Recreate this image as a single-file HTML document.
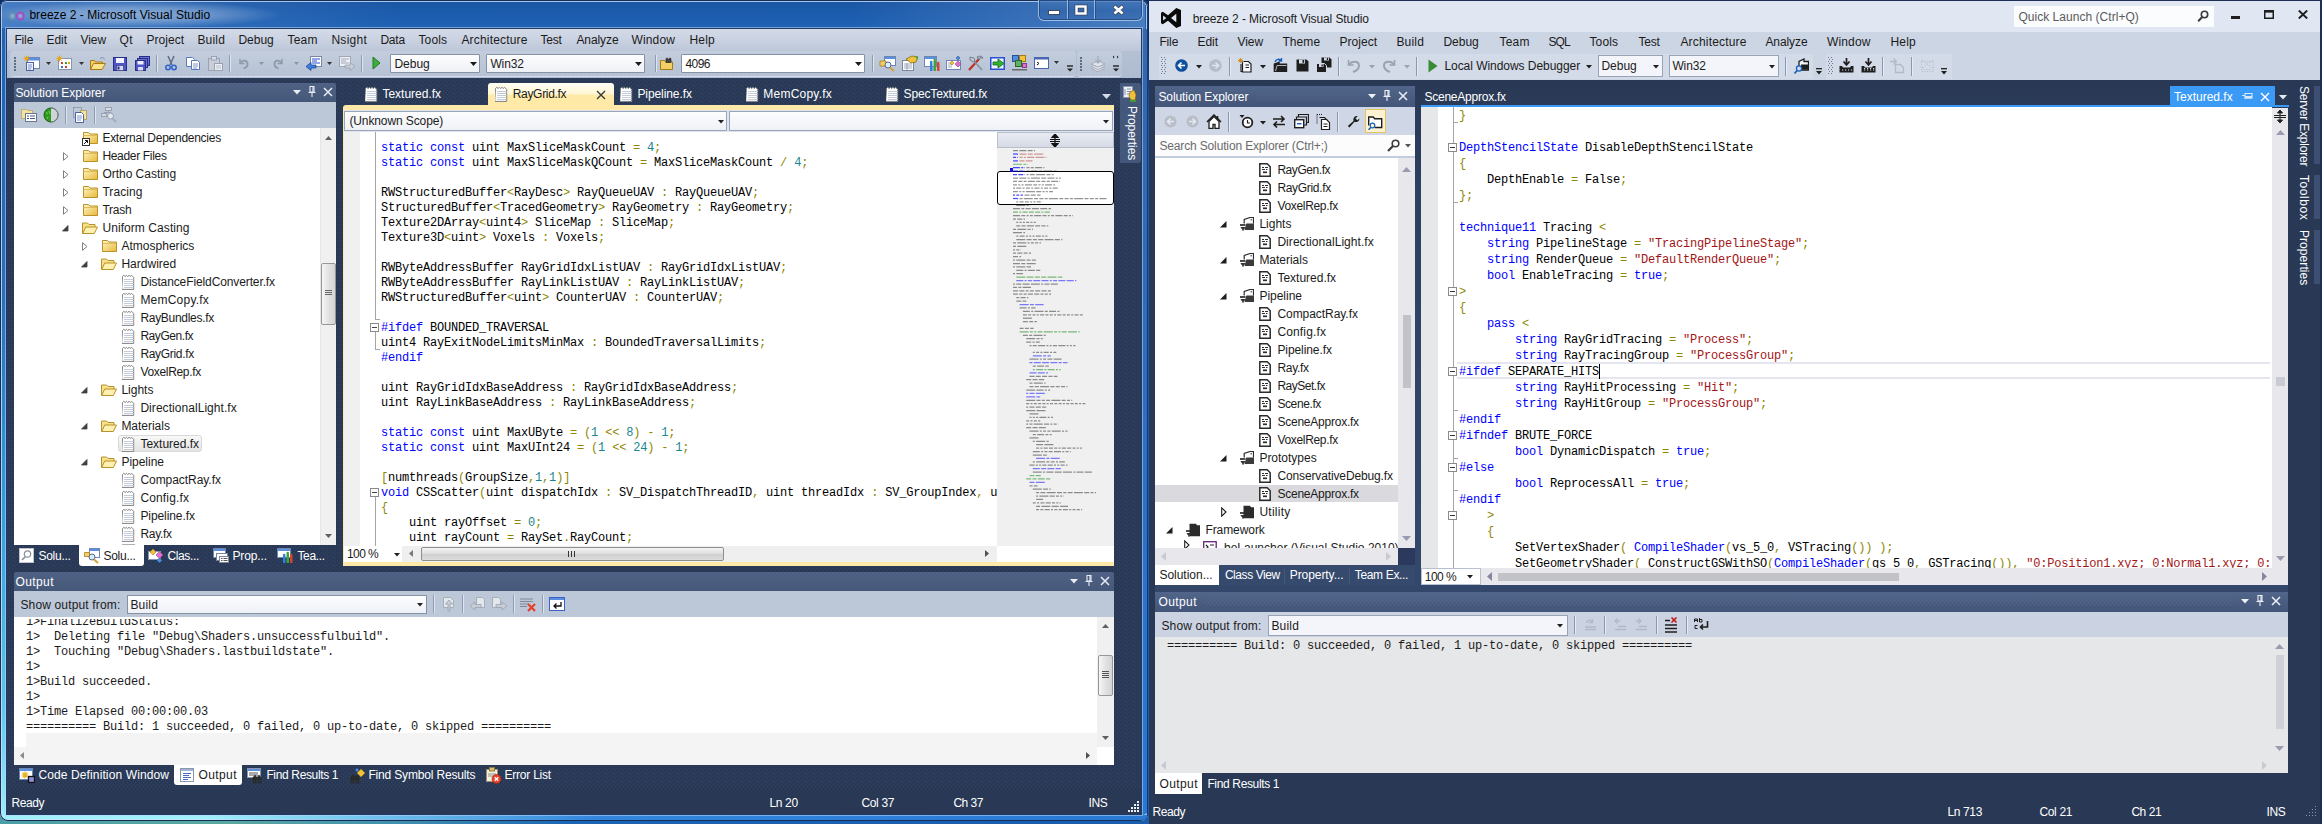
<!DOCTYPE html>
<html><head><meta charset="utf-8"><title>breeze 2 - Microsoft Visual Studio</title>
<style>
html,body{margin:0;padding:0;}
body{width:2322px;height:824px;overflow:hidden;position:relative;background:#293955;font-family:"Liberation Sans",sans-serif;}
div,span,svg{position:absolute;}
.t{white-space:pre;line-height:20px;height:20px;font-size:12px;}
.u{font-family:"Liberation Sans",sans-serif;}
.m{font-family:"Liberation Mono",monospace;font-size:12px;letter-spacing:-.201px;}
.c span{position:static;}
</style></head>
<body>
<svg width="0" height="0" style="left:0;top:0"><defs><linearGradient id="fg" x1="0" y1="0" x2="1" y2="1"><stop offset="0" stop-color="#fff6c8"/><stop offset="1" stop-color="#e8b93a"/></linearGradient></defs></svg>
<div style="left:0px;top:0px;width:1149px;height:824px;background:linear-gradient(180deg,#0b2a6a 0,#0b2a6a 40px,rgba(11,42,106,0) 120px),linear-gradient(90deg,#4a9ea6,#5aa8a0 20%,#3f8fb0 35%,#1c64b4 50%,#1a5cae 100%);"></div>
<div style="left:0px;top:0px;width:1148px;height:821px;background:linear-gradient(180deg,#1b55a3 0px,#1c5cae 14px,#2062b4 29px,#2870c0 300px,#36a0dc 520px,#5cc4ea 700px,#96ecf8 812px,#a6f4fb 821px);border-radius:7px 7px 8px 8px;box-shadow:inset 0 0 0 1px #14305a, inset 0 0 0 2px rgba(205,226,250,.8);"></div>
<div style="left:2px;top:2px;width:400px;height:26px;background:linear-gradient(90deg,rgba(90,140,205,.7),rgba(70,125,195,.5) 35%,rgba(40,100,180,0) 100%);"></div>
<div style="left:200px;top:815px;width:947px;height:5px;background:linear-gradient(90deg,rgba(45,128,218,0),rgba(45,128,218,.95) 42%,rgba(40,120,212,1));border-radius:0 0 6px 0;"></div>
<div style="left:1142px;top:29px;width:6px;height:786px;background:linear-gradient(180deg,#3567ab,#2e6cbc 40%,#2878d6);border-radius:0 0 5px 0;"></div>
<div style="left:1147px;top:8px;width:1px;height:808px;background:#1a3a6c;"></div>
<div style="left:-10px;top:1px;width:290px;height:27px;background:radial-gradient(ellipse at center,rgba(255,255,255,.42) 0%,rgba(255,255,255,.3) 35%,rgba(255,255,255,.08) 62%,rgba(255,255,255,0) 72%);"></div>
<svg style="left:8px;top:11px;" width="17" height="10" viewBox="0 0 17 10"><path d="M8.300 5C6.800 2.600 5.600 1.500 4.200 1.500 2.500 1.500 1.300 2.900 1.300 5s1.200 3.500 2.900 3.500c1.400 0 2.600-1.100 4.100-3.500z" fill="rgba(200,225,240,.35)" stroke="#5f8eae" stroke-width="1.900"/><path d="M8.300 5c1.500 2.400 2.700 3.500 4.200 3.500 1.800 0 3.100-1.400 3.100-3.500s-1.300-3.500-3.100-3.500c-1.500 0-2.700 1.100-4.200 3.500z" fill="rgba(230,200,245,.35)" stroke="#a24ec6" stroke-width="1.900"/></svg>
<span class="t u" style="left:29.4px;top:5px;color:#000;letter-spacing:0.047px;">breeze 2 - Microsoft Visual Studio</span>
<div style="left:850px;top:2px;width:295px;height:27px;background:linear-gradient(90deg,rgba(90,135,195,0),rgba(90,135,195,.5) 70%,rgba(100,145,200,.6));"></div>
<div style="left:1038px;top:0px;width:105px;height:21px;background:linear-gradient(180deg,rgba(70,120,185,.75),rgba(52,104,172,.75) 45%,rgba(48,100,170,.75) 50%,rgba(58,110,178,.75));border:1px solid rgba(175,200,232,.85);border-top:none;border-radius:0 0 6px 6px;box-sizing:border-box;box-shadow:inset 0 0 0 1px rgba(20,50,100,.55);"></div>
<div style="left:1067px;top:0px;width:1px;height:19px;background:rgba(175,200,232,.8);"></div>
<div style="left:1068px;top:0px;width:1px;height:19px;background:rgba(20,50,100,.5);"></div>
<div style="left:1094px;top:0px;width:1px;height:19px;background:rgba(175,200,232,.8);"></div>
<div style="left:1095px;top:0px;width:1px;height:19px;background:rgba(20,50,100,.5);"></div>
<svg style="left:1047px;top:9px;" width="14" height="7" viewBox="0 0 14 7"><rect x="1.500" y="1.500" width="11" height="4" fill="#fff" stroke="#3c4a64" stroke-width="1"/></svg>
<svg style="left:1074px;top:4px;" width="14" height="12" viewBox="0 0 14 12"><rect x="2.500" y="2.500" width="9" height="7" fill="none" stroke="#3c4a64" stroke-width="4"/><rect x="2.500" y="2.500" width="9" height="7" fill="none" stroke="#fff" stroke-width="2.400"/></svg>
<svg style="left:1111px;top:4px;" width="15" height="12" viewBox="0 0 15 12"><path d="M3 2l9 8M12 2l-9 8" stroke="#3c4a64" stroke-width="4.200"/><path d="M3.400 2.400l8.200 7.200M11.600 2.400l-8.200 7.200" stroke="#fff" stroke-width="2.600"/></svg>
<div style="left:7px;top:29px;width:1134px;height:785px;background:#293955;box-shadow:0 0 0 1px #1f3a68,0 0 0 2px rgba(190,215,245,.55);"></div>
<svg style="left:7px;top:78px;" width="1134" height="712" viewBox="0 0 1134 712"><defs><pattern id="pl" width="4" height="4" patternUnits="userSpaceOnUse"><rect x="0" y="0" width="1" height="1" fill="#34476b"/><rect x="2" y="2" width="1" height="1" fill="#34476b"/></pattern></defs><rect width="1134" height="712" fill="url(#pl)"/></svg>
<div style="left:7px;top:29px;width:1134px;height:22px;background:linear-gradient(180deg,#d3dae7 0,#cbd3e2 45%,#bcc7d9 100%);"></div>
<span class="t u" style="left:14.4px;top:30px;color:#1b1b1b;letter-spacing:-0.136px;">File</span>
<span class="t u" style="left:46.4px;top:30px;color:#1b1b1b;letter-spacing:0.028px;">Edit</span>
<span class="t u" style="left:80.4px;top:30px;color:#1b1b1b;letter-spacing:0.001px;">View</span>
<span class="t u" style="left:119.4px;top:30px;color:#1b1b1b;letter-spacing:0.564px;">Qt</span>
<span class="t u" style="left:146.4px;top:30px;color:#1b1b1b;letter-spacing:0.063px;">Project</span>
<span class="t u" style="left:197.4px;top:30px;color:#1b1b1b;letter-spacing:0.183px;">Build</span>
<span class="t u" style="left:238.4px;top:30px;color:#1b1b1b;letter-spacing:0.005px;">Debug</span>
<span class="t u" style="left:287.4px;top:30px;color:#1b1b1b;letter-spacing:0.239px;">Team</span>
<span class="t u" style="left:331.4px;top:30px;color:#1b1b1b;letter-spacing:0.297px;">Nsight</span>
<span class="t u" style="left:380.4px;top:30px;color:#1b1b1b;letter-spacing:-0.190px;">Data</span>
<span class="t u" style="left:418.4px;top:30px;color:#1b1b1b;letter-spacing:0.157px;">Tools</span>
<span class="t u" style="left:461.4px;top:30px;color:#1b1b1b;letter-spacing:0.181px;">Architecture</span>
<span class="t u" style="left:540.4px;top:30px;color:#1b1b1b;letter-spacing:-0.179px;">Test</span>
<span class="t u" style="left:576.4px;top:30px;color:#1b1b1b;letter-spacing:-0.072px;">Analyze</span>
<span class="t u" style="left:631.4px;top:30px;color:#1b1b1b;letter-spacing:0.185px;">Window</span>
<span class="t u" style="left:689.4px;top:30px;color:#1b1b1b;letter-spacing:0.228px;">Help</span>
<div style="left:7px;top:51px;width:1134px;height:27px;background:linear-gradient(180deg,#b4c0d4,#aebbd0);"></div>
<div style="left:10px;top:51px;width:1066px;height:25px;background:linear-gradient(180deg,#c3cddd,#bcc7d8 50%,#b6c2d5);border-radius:4px;box-shadow:0 1px 0 #d5dcea;"></div>
<div style="left:1077px;top:51px;width:45px;height:25px;background:linear-gradient(180deg,#c3cddd,#bcc7d8 50%,#b6c2d5);border-radius:4px;box-shadow:0 1px 0 #d5dcea;"></div>
<div style="left:14px;top:57px;width:2px;height:2px;background:#5c6a82;"></div>
<div style="left:14px;top:60px;width:2px;height:2px;background:#5c6a82;"></div>
<div style="left:14px;top:63px;width:2px;height:2px;background:#5c6a82;"></div>
<div style="left:14px;top:66px;width:2px;height:2px;background:#5c6a82;"></div>
<div style="left:14px;top:69px;width:2px;height:2px;background:#5c6a82;"></div>
<svg style="left:23px;top:55px;" width="18" height="17" viewBox="0 0 18 17"><rect x="4.5" y="2.5" width="12" height="11" fill="#fff" stroke="#6f86b5"/><rect x="5" y="3" width="11" height="2.5" fill="#5b8fe0"/><rect x="3.5" y="7.5" width="7" height="8" fill="#eef3fb" stroke="#4a64a0"/><path d="M5 10h4M5 12h4M5 14h3" stroke="#5a78c0" stroke-width=".8"/><path d="M3.5 .5v6M.5 3.5h6M1.4 1.4l4.2 4.2M5.6 1.4L1.4 5.6" stroke="#e6a515" stroke-width="1"/></svg>
<svg style="left:46px;top:62px;" width="5" height="3" viewBox="0 0 5 3"><path d="M0 0h5l-2.5 3z" fill="#333"/></svg>
<svg style="left:56px;top:55px;" width="18" height="17" viewBox="0 0 18 17"><rect x="2.5" y="3.5" width="13" height="11" fill="#fdfdfd" stroke="#8a96ad"/><rect x="5" y="7" width="2" height="2" fill="#d83b2b"/><rect x="9" y="7" width="2" height="2" fill="#3d9b35"/><rect x="12" y="7" width="2" height="2" fill="#e6a515"/><rect x="5" y="11" width="2" height="2" fill="#3a6fd8"/><rect x="9" y="11" width="2" height="2" fill="#d83b2b"/><path d="M3.5 .5v6M.5 3.5h6M1.4 1.4l4.2 4.2M5.6 1.4L1.4 5.6" stroke="#e6a515" stroke-width="1"/></svg>
<svg style="left:79px;top:62px;" width="5" height="3" viewBox="0 0 5 3"><path d="M0 0h5l-2.5 3z" fill="#333"/></svg>
<svg style="left:89px;top:55px;" width="18" height="17" viewBox="0 0 18 17"><path d="M1.5 14.5v-9h4l1 1.5h7v2" fill="#f3d067" stroke="#a87c14"/><path d="M1.5 14.5l3-6h12l-3.5 6z" fill="#fbe38e" stroke="#a87c14"/><path d="M11 3.5c2-1.5 4-1 4.5 1" fill="none" stroke="#7d8fb0"/></svg>
<svg style="left:112px;top:55px;" width="16" height="17" viewBox="0 0 16 17"><rect x="1.5" y="2.5" width="13" height="13" fill="#4f56c8" stroke="#2a2f86"/><rect x="4" y="3" width="8" height="5" fill="#f2f4ff"/><rect x="4.5" y="10.5" width="7" height="5" fill="#d8daf0" stroke="#2a2f86" stroke-width=".6"/><rect x="5.5" y="11.5" width="2" height="3" fill="#2a2f86"/></svg>
<svg style="left:134px;top:55px;" width="17" height="17" viewBox="0 0 17 17"><rect x="5.500" y="1.500" width="10" height="9" fill="#6a70d2" stroke="#2a2f86"/><rect x="3.5" y="3.500" width="10" height="9" fill="#6a70d2" stroke="#2a2f86"/><rect x="1.500" y="5.500" width="10" height="10" fill="#4f56c8" stroke="#2a2f86"/><rect x="3.500" y="6" width="6" height="3.500" fill="#eef"/><rect x="4" y="12" width="5" height="3.500" fill="#d8daf0"/></svg>
<svg style="left:164px;top:55px;" width="14" height="17" viewBox="0 0 14 17"><path d="M4 1l4 9M10 1l-4 9" stroke="#5a6a86" stroke-width="1.4"/><circle cx="4" cy="12.500" r="2.200" fill="none" stroke="#2f62c8" stroke-width="1.500"/><circle cx="10" cy="12.500" r="2.200" fill="none" stroke="#2f62c8" stroke-width="1.500"/></svg>
<svg style="left:185px;top:56px;" width="16" height="15" viewBox="0 0 16 15"><path d="M1.500 1.500h6l2 2v7h-8z" fill="#fff" stroke="#5a78c0"/><path d="M6.500 4.500h6l2 2v7h-8z" fill="#fff" stroke="#5a78c0"/><path d="M8 8h5M8 10h5M8 12h4" stroke="#5a78c0" stroke-width=".8"/></svg>
<svg style="left:207px;top:55px;" width="17" height="17" viewBox="0 0 17 17"><rect x="1.500" y="3.500" width="11" height="12" fill="#c9ced8" stroke="#9aa3b4"/><rect x="4.500" y="1.500" width="5" height="3.500" fill="#d7dbe3" stroke="#9aa3b4"/><rect x="7.500" y="8.500" width="8" height="7" fill="#eceef2" stroke="#9aa3b4"/><path d="M9 11h5M9 13h5" stroke="#aab2c0" stroke-width=".8"/></svg>
<svg style="left:238px;top:57px;" width="12" height="13" viewBox="0 0 12 13"><path d="M2 2v4.500h4.500" fill="none" stroke="#9099aa" stroke-width="1.500"/><path d="M2.500 6c1.500-3 7-3.500 7 1 0 2.500-2 4-4 4.500" fill="none" stroke="#9099aa" stroke-width="1.800"/></svg>
<svg style="left:259px;top:62px;" width="5" height="3" viewBox="0 0 5 3"><path d="M0 0h5l-2.500 3z" fill="#8b93a4"/></svg>
<svg style="left:272px;top:57px;" width="12" height="13" viewBox="0 0 12 13"><path d="M10 2v4.500h-4.500" fill="none" stroke="#9099aa" stroke-width="1.500"/><path d="M9.500 6c-1.500-3-7-3.500-7 1 0 2.500 2 4 4 4.500" fill="none" stroke="#9099aa" stroke-width="1.800"/></svg>
<svg style="left:294px;top:62px;" width="5" height="3" viewBox="0 0 5 3"><path d="M0 0h5l-2.500 3z" fill="#8b93a4"/></svg>
<svg style="left:305px;top:55px;" width="18" height="17" viewBox="0 0 18 17"><rect x="5.500" y="1.500" width="11" height="10" fill="#fff" stroke="#7b869c"/><path d="M7 4h8M7 6h5M7 8h8" stroke="#2a4fd0" stroke-width="1"/><path d="M1 11.500l5-4v2.500h5v3h-5v2.500z" fill="#3f7de0" stroke="#1d4aa0" stroke-width=".8"/></svg>
<svg style="left:327px;top:62px;" width="5" height="3" viewBox="0 0 5 3"><path d="M0 0h5l-2.5 3z" fill="#333"/></svg>
<svg style="left:338px;top:55px;" width="18" height="17" viewBox="0 0 18 17"><rect x="1.500" y="1.500" width="11" height="10" fill="#eef0f4" stroke="#a0a8b8"/><path d="M3 4h8M3 6h5M3 8h8" stroke="#a0a8b8" stroke-width="1"/><path d="M17 11.500l-5-4v2.500h-5v3h5v2.500z" fill="#c8ccd4" stroke="#9aa2b2" stroke-width=".8"/></svg>
<svg style="left:372px;top:56px;" width="9" height="14" viewBox="0 0 9 14"><path d="M1 1l7 6-7 6z" fill="#3bb13b" stroke="#1f7a1f" stroke-width="1"/></svg>
<svg style="left:659px;top:55px;" width="18" height="17" viewBox="0 0 18 17"><path d="M1.500 14.500v-9h4l1 1.500h7v7.500z" fill="#f3d067" stroke="#a87c14"/><path d="M7 4.500c0-2 2-2 2 0M10 4.500c0-2 2-2 2 0M7 4.500h5v3h-5z" fill="#444" stroke="#333" stroke-width=".8"/></svg>
<svg style="left:879px;top:55px;" width="18" height="17" viewBox="0 0 18 17"><rect x="5.500" y="1.500" width="11" height="9" fill="#fff" stroke="#6f86b5"/><rect x="6" y="2" width="10" height="2" fill="#5b8fe0"/><path d="M1 6h6v5h-6z" fill="#f3d067" stroke="#a87c14" stroke-width=".8"/><circle cx="9" cy="10" r="3" fill="#d8ecff" stroke="#5a6a86"/><path d="M11 12.500l4 3.500" stroke="#d7a13a" stroke-width="2"/></svg>
<svg style="left:901px;top:55px;" width="18" height="17" viewBox="0 0 18 17"><rect x="1.500" y="5.500" width="11" height="10" fill="#fff" stroke="#7b869c"/><path d="M3 9h8M3 11h8M3 13h8M6 8v7" stroke="#8a96ad" stroke-width=".8"/><path d="M5 4l6-3 6 1-2 5-5 1z" fill="#f0c23c" stroke="#8a6914" stroke-width=".8"/><path d="M14 2l3-1v4" fill="#4da74d"/></svg>
<svg style="left:923px;top:55px;" width="18" height="17" viewBox="0 0 18 17"><rect x="1.500" y="1.500" width="12" height="10" fill="#fff" stroke="#6f86b5"/><rect x="2" y="2" width="11" height="2" fill="#5b8fe0"/><rect x="7" y="8" width="2.500" height="8" fill="#2f7de0"/><rect x="10.500" y="6" width="2.500" height="10" fill="#3da33d"/><rect x="14" y="9" width="2.500" height="7" fill="#d8452f"/><circle cx="8.200" cy="7" r="1.300" fill="#2f7de0"/><circle cx="11.700" cy="5" r="1.300" fill="#3da33d"/><circle cx="15.200" cy="8" r="1.300" fill="#d8452f"/></svg>
<svg style="left:945px;top:55px;" width="18" height="17" viewBox="0 0 18 17"><rect x="1.500" y="5.500" width="14" height="9" fill="#fff" stroke="#6f86b5"/><path d="M3 8h4M3 10h4M3 12h4" stroke="#8a96ad" stroke-width=".8"/><path d="M5 8l2-2 2 2-2 2z" fill="#f0c23c" stroke="#a87c14" stroke-width=".6"/><path d="M10 9l3-3 3 3-3 3z" fill="#e070d0" stroke="#8a3a86" stroke-width=".6"/><path d="M11 3l2-2 2 2-2 2z" fill="#4d8fe0" stroke="#2a4f9a" stroke-width=".6"/></svg>
<svg style="left:967px;top:55px;" width="18" height="17" viewBox="0 0 18 17"><path d="M2 15L12 4" stroke="#c03020" stroke-width="2.200"/><path d="M10 2c2-1.500 5-1 6 1l-3 0-1 2z" fill="#a8b0c0" stroke="#5a6476" stroke-width=".7"/><path d="M15 15L6 5" stroke="#8a93a6" stroke-width="1.800"/><path d="M3 2l4 1 1 3-2 1-3-2z" fill="#c0c6d2" stroke="#5a6476" stroke-width=".7"/></svg>
<svg style="left:989px;top:56px;" width="17" height="15" viewBox="0 0 17 15"><rect x="1" y="1" width="15" height="13" fill="#2a4fd0"/><rect x="2.500" y="2.500" width="12" height="10" fill="#eef3ff"/><path d="M4 6h5v-3l6 4.500-6 4.500v-3h-5z" fill="#2fb52f" stroke="#136813" stroke-width=".8"/></svg>
<svg style="left:1011px;top:54px;" width="17" height="18" viewBox="0 0 17 18"><rect x="1.500" y="1.500" width="6" height="6" fill="#4d8fe0" stroke="#2a4f9a"/><rect x="8.500" y="1.500" width="6" height="6" fill="#f0c23c" stroke="#a87c14"/><rect x="4.500" y="6.500" width="6" height="6" fill="#5fb05f" stroke="#2a6a2a"/><rect x="11.500" y="9.500" width="4" height="4" fill="#e070d0" stroke="#8a3a86"/><rect x="1" y="15" width="15" height="1.500" fill="#6a6a6a"/></svg>
<svg style="left:1034px;top:57px;" width="15" height="12" viewBox="0 0 15 12"><rect x=".5" y=".5" width="14" height="11" fill="#fff" stroke="#4a66b0"/><rect x="1" y="1" width="13" height="1.500" fill="#4a66b0"/><path d="M3 5l2 1.500-2 1.500" fill="none" stroke="#111" stroke-width="1"/></svg>
<svg style="left:1054px;top:61px;" width="5" height="3" viewBox="0 0 5 3"><path d="M0 0h5l-2.5 3z" fill="#333"/></svg>
<svg style="left:1067px;top:65px;" width="6" height="7" viewBox="0 0 6 7"><path d="M0 1h6" stroke="#222" stroke-width="1.400"/><path d="M0 3.500h6l-3 3z" fill="#222"/></svg>
<div style="left:1080px;top:57px;width:2px;height:2px;background:#5c6a82;"></div>
<div style="left:1080px;top:60px;width:2px;height:2px;background:#5c6a82;"></div>
<div style="left:1080px;top:63px;width:2px;height:2px;background:#5c6a82;"></div>
<div style="left:1080px;top:66px;width:2px;height:2px;background:#5c6a82;"></div>
<div style="left:1080px;top:69px;width:2px;height:2px;background:#5c6a82;"></div>
<svg style="left:1090px;top:55px;" width="16" height="17" viewBox="0 0 16 17"><path d="M1 9l7-3 7 3-7 3z M1 11.500l7 3 7-3M1 13.500l7 3 7-3" fill="#dfe3ea" stroke="#9aa2b2" stroke-width=".8"/><path d="M8 1v6M5.500 5l2.500 3 2.500-3" fill="none" stroke="#a4acba" stroke-width="1.200"/></svg>
<svg style="left:1113px;top:55px;" width="6" height="17" viewBox="0 0 6 17"><path d="M0 1.500l1.500 1.500-1.500 1.500zM4 1.500l1.500 1.500-1.500 1.500z" fill="#222" transform="translate(0,-1)"/><path d="M0 11h6" stroke="#222" stroke-width="1.400"/><path d="M0 13.500h6l-3 3z" fill="#222"/></svg>
<div style="left:390px;top:54px;width:90px;height:19px;background:linear-gradient(180deg,#fdfdfe,#eef1f6);border:1px solid #8591a6;box-sizing:border-box;border-radius:1px;"></div>
<span class="t u" style="left:394.4px;top:53.5px;color:#1b1b1b;letter-spacing:0.005px;">Debug</span>
<svg style="left:470px;top:62px;" width="7" height="4" viewBox="0 0 7 4"><path d="M0 0h7l-3.5 4z" fill="#1b1b1b"/></svg>
<div style="left:486px;top:54px;width:159px;height:19px;background:linear-gradient(180deg,#fdfdfe,#eef1f6);border:1px solid #8591a6;box-sizing:border-box;border-radius:1px;"></div>
<span class="t u" style="left:490.4px;top:53.5px;color:#1b1b1b;letter-spacing:-0.123px;">Win32</span>
<svg style="left:635px;top:62px;" width="7" height="4" viewBox="0 0 7 4"><path d="M0 0h7l-3.5 4z" fill="#1b1b1b"/></svg>
<div style="left:681px;top:54px;width:184px;height:19px;background:#fff;border:1px solid #8591a6;box-sizing:border-box;border-radius:1px;"></div>
<span class="t u" style="left:685.4px;top:53.5px;color:#1b1b1b;letter-spacing:-0.526px;">4096</span>
<svg style="left:855px;top:62px;" width="7" height="4" viewBox="0 0 7 4"><path d="M0 0h7l-3.5 4z" fill="#1b1b1b"/></svg>
<div style="left:156px;top:55px;width:1px;height:17px;background:#8e9bb0;"></div>
<div style="left:157px;top:55px;width:1px;height:17px;background:#dfe5ef;"></div>
<div style="left:229px;top:55px;width:1px;height:17px;background:#8e9bb0;"></div>
<div style="left:230px;top:55px;width:1px;height:17px;background:#dfe5ef;"></div>
<div style="left:361px;top:55px;width:1px;height:17px;background:#8e9bb0;"></div>
<div style="left:362px;top:55px;width:1px;height:17px;background:#dfe5ef;"></div>
<div style="left:655px;top:55px;width:1px;height:17px;background:#8e9bb0;"></div>
<div style="left:656px;top:55px;width:1px;height:17px;background:#dfe5ef;"></div>
<div style="left:872px;top:55px;width:1px;height:17px;background:#8e9bb0;"></div>
<div style="left:873px;top:55px;width:1px;height:17px;background:#dfe5ef;"></div>
<div style="left:14px;top:83px;width:322px;height:19px;background:linear-gradient(180deg,#4f6285,#465879);border-radius:2px 2px 0 0;"></div>
<span class="t u" style="left:15.4px;top:82.5px;color:#fff;letter-spacing:-0.082px;">Solution Explorer</span>
<svg style="left:293px;top:90px;" width="8" height="5" viewBox="0 0 8 5"><path d="M0 0h8l-4 4.500z" fill="#e8ecf4"/></svg>
<svg style="left:308px;top:86px;" width="8" height="12" viewBox="0 0 8 12"><path d="M2 .500h4v5.500h-4zM.500 6.500h7M4 6.500v4.500" fill="none" stroke="#e8ecf4" stroke-width="1.100"/><path d="M5 1v5" stroke="#e8ecf4" stroke-width="1.200"/></svg>
<svg style="left:323px;top:87px;" width="10" height="10" viewBox="0 0 10 10"><path d="M1 1l8 8M9 1l-8 8" stroke="#e8ecf4" stroke-width="1.500"/></svg>
<div style="left:14px;top:102px;width:322px;height:26px;background:#bcc7d8;"></div>
<svg style="left:21px;top:107px;" width="16" height="15" viewBox="0 0 16 15"><path d="M.500 2.500h5l1 1h5v8h-11z" fill="#f3e3a0" stroke="#b8a36a" stroke-width=".8"/><rect x="4.500" y="6.500" width="11" height="8" fill="#fff" stroke="#6a7690"/><path d="M6 9h2M9 9h5M6 11.500h2M9 11.500h5" stroke="#4a5a80" stroke-width="1"/></svg>
<svg style="left:43px;top:107px;" width="16" height="16" viewBox="0 0 16 16"><circle cx="8" cy="8" r="7" fill="#2f9a1e" stroke="#1c5c12"/><path d="M8 1a7 7 0 0 1 0 14z" fill="#cfd4d8"/><path d="M8 1a7 7 0 0 1 0 14" fill="none" stroke="#70757c"/><path d="M3 5l2 2M5 10l-1 2M6 4l1 3" stroke="#6fd44f" stroke-width="1"/></svg>
<div style="left:65px;top:106px;width:1px;height:18px;background:#8e9bb0;"></div>
<div style="left:66px;top:106px;width:1px;height:18px;background:#dfe5ef;"></div>
<svg style="left:72px;top:107px;" width="16" height="16" viewBox="0 0 16 16"><path d="M1.500 .500h8v3M1.500 .500v10h3" fill="none" stroke="#6a7690" stroke-dasharray="1 1"/><rect x="8.500" y="3.500" width="6" height="9" fill="#f3e3a0" stroke="#b8a36a"/><path d="M3.500 5.500h6l2 2v8h-8z" fill="#fff" stroke="#4a64a0"/><path d="M5 9h5M5 11h5M5 13h4" stroke="#5a78c0" stroke-width=".8"/></svg>
<div style="left:94px;top:106px;width:1px;height:18px;background:#8e9bb0;"></div>
<div style="left:95px;top:106px;width:1px;height:18px;background:#dfe5ef;"></div>
<svg style="left:101px;top:107px;" width="16" height="16" viewBox="0 0 16 16"><rect x="4.500" y=".500" width="6" height="3" fill="#d5d9e0" stroke="#9aa2b2"/><rect x=".500" y="6.500" width="5" height="3" fill="#d5d9e0" stroke="#9aa2b2"/><path d="M7.500 3.500v2h-4.500v1M7.500 5.500h3" fill="none" stroke="#9aa2b2"/><circle cx="9.500" cy="9" r="3" fill="#e4e8ee" stroke="#9aa2b2"/><path d="M11.500 11.500l3.500 3.500" stroke="#a6adba" stroke-width="2"/></svg>
<div style="left:14px;top:128px;width:322px;height:417px;background:#fff;"></div>
<div style="left:320px;top:128px;width:16px;height:417px;background:#f0f0f0;border-left:1px solid #e6e6e6;box-sizing:border-box;"></div>
<svg style="left:325px;top:136px;" width="7" height="4" viewBox="0 0 7 4"><path d="M0 4l3.500-4 3.500 4z" fill="#606060"/></svg>
<svg style="left:325px;top:534px;" width="7" height="4" viewBox="0 0 7 4"><path d="M0 0l3.500 4 3.500-4z" fill="#606060"/></svg>
<div style="left:321px;top:263px;width:15px;height:62px;background:linear-gradient(90deg,#f6f6f6,#e2e2e2 50%,#d4d4d4);border:1px solid #979797;border-radius:2px;box-sizing:border-box;"></div>
<div style="left:325px;top:290px;width:7px;height:1px;background:#666;"></div>
<div style="left:325px;top:292px;width:7px;height:1px;background:#666;"></div>
<div style="left:325px;top:294px;width:7px;height:1px;background:#666;"></div>
<svg style="left:83px;top:130.5px;" width="16" height="14" viewBox="0 0 16 14"><path d="M.500 12.500v-11h5l1.500 1.500h7.500v9.500z" fill="url(#fg)" stroke="#b8922a"/><path d="M.500 4.500h14" stroke="#d9b24a" stroke-width=".8"/></svg>
<svg style="left:82px;top:137.5px;" width="8" height="8" viewBox="0 0 8 8"><rect x=".500" y=".500" width="7" height="7" fill="#fff" stroke="#333"/><path d="M2 6l3.500-3.500M3 2.500h2.500v2.500" fill="none" stroke="#111" stroke-width="1"/></svg>
<span class="t u" style="left:102.4px;top:127.5px;color:#1b1b1b;letter-spacing:-0.266px;">External Dependencies</span>
<svg style="left:83px;top:148.5px;" width="16" height="14" viewBox="0 0 16 14"><path d="M.500 12.500v-11h5l1.500 1.500h7.500v9.500z" fill="url(#fg)" stroke="#b8922a"/><path d="M.500 4.500h14" stroke="#d9b24a" stroke-width=".8"/></svg>
<svg style="left:63px;top:151.5px;" width="6" height="9" viewBox="0 0 6 9"><path d="M.500 .700l4.500 3.800-4.500 3.800z" fill="#fff" stroke="#7f7f7f" stroke-width="1"/></svg>
<span class="t u" style="left:102.4px;top:145.5px;color:#1b1b1b;letter-spacing:-0.319px;">Header Files</span>
<svg style="left:83px;top:166.5px;" width="16" height="14" viewBox="0 0 16 14"><path d="M.500 12.500v-11h5l1.500 1.500h7.500v9.500z" fill="url(#fg)" stroke="#b8922a"/><path d="M.500 4.500h14" stroke="#d9b24a" stroke-width=".8"/></svg>
<svg style="left:63px;top:169.5px;" width="6" height="9" viewBox="0 0 6 9"><path d="M.500 .700l4.500 3.800-4.500 3.800z" fill="#fff" stroke="#7f7f7f" stroke-width="1"/></svg>
<span class="t u" style="left:102.4px;top:163.5px;color:#1b1b1b;letter-spacing:-0.019px;">Ortho Casting</span>
<svg style="left:83px;top:184.5px;" width="16" height="14" viewBox="0 0 16 14"><path d="M.500 12.500v-11h5l1.500 1.500h7.500v9.500z" fill="url(#fg)" stroke="#b8922a"/><path d="M.500 4.500h14" stroke="#d9b24a" stroke-width=".8"/></svg>
<svg style="left:63px;top:187.5px;" width="6" height="9" viewBox="0 0 6 9"><path d="M.500 .700l4.500 3.800-4.500 3.800z" fill="#fff" stroke="#7f7f7f" stroke-width="1"/></svg>
<span class="t u" style="left:102.4px;top:181.5px;color:#1b1b1b;letter-spacing:0.060px;">Tracing</span>
<svg style="left:83px;top:202.5px;" width="16" height="14" viewBox="0 0 16 14"><path d="M.500 12.500v-11h5l1.500 1.500h7.500v9.500z" fill="url(#fg)" stroke="#b8922a"/><path d="M.500 4.500h14" stroke="#d9b24a" stroke-width=".8"/></svg>
<svg style="left:63px;top:205.5px;" width="6" height="9" viewBox="0 0 6 9"><path d="M.500 .700l4.500 3.800-4.500 3.800z" fill="#fff" stroke="#7f7f7f" stroke-width="1"/></svg>
<span class="t u" style="left:102.4px;top:199.5px;color:#1b1b1b;letter-spacing:-0.207px;">Trash</span>
<svg style="left:82px;top:220.5px;" width="16" height="14" viewBox="0 0 16 14"><path d="M.500 12.500v-10.500h5l1.500 1.500h6v3" fill="#f7e08a" stroke="#b8922a"/><path d="M.700 12.500l3-6.500h11.800l-3.200 6.500z" fill="#fdf0b0" stroke="#b8922a"/></svg>
<svg style="left:62px;top:224.5px;" width="7" height="7" viewBox="0 0 7 7"><path d="M6 .500v5.500h-5.500z" fill="#404040" stroke="#404040" stroke-width=".8"/></svg>
<span class="t u" style="left:102.4px;top:217.5px;color:#1b1b1b;letter-spacing:0.078px;">Uniform Casting</span>
<svg style="left:102px;top:238.5px;" width="16" height="14" viewBox="0 0 16 14"><path d="M.500 12.500v-11h5l1.500 1.500h7.500v9.500z" fill="url(#fg)" stroke="#b8922a"/><path d="M.500 4.500h14" stroke="#d9b24a" stroke-width=".8"/></svg>
<svg style="left:82px;top:241.5px;" width="6" height="9" viewBox="0 0 6 9"><path d="M.500 .700l4.500 3.800-4.500 3.800z" fill="#fff" stroke="#7f7f7f" stroke-width="1"/></svg>
<span class="t u" style="left:121.4px;top:235.5px;color:#1b1b1b;letter-spacing:0.025px;">Atmospherics</span>
<svg style="left:101px;top:256.5px;" width="16" height="14" viewBox="0 0 16 14"><path d="M.500 12.500v-10.500h5l1.500 1.500h6v3" fill="#f7e08a" stroke="#b8922a"/><path d="M.700 12.500l3-6.500h11.800l-3.200 6.500z" fill="#fdf0b0" stroke="#b8922a"/></svg>
<svg style="left:81px;top:260.5px;" width="7" height="7" viewBox="0 0 7 7"><path d="M6 .500v5.500h-5.500z" fill="#404040" stroke="#404040" stroke-width=".8"/></svg>
<span class="t u" style="left:121.4px;top:253.5px;color:#1b1b1b;letter-spacing:0.012px;">Hardwired</span>
<svg style="left:122px;top:273.5px;" width="14" height="16" viewBox="0 0 14 16"><path d="M.500 2.500l1.300-1.200 1.300 1.200 1.300-1.200 1.300 1.200 1.300-1.200 1.300 1.200 1.300-1.200 2.100 2.100v12h-12z" fill="#fff" stroke="#7f7f7f" stroke-width="1"/><path d="M2 5.500h9.500M2 7.500h9.500M2 9.500h9.500M2 11.500h9.500M2 13.500h9.500" stroke="#c4cbdb" stroke-width="1"/></svg>
<span class="t u" style="left:140.4px;top:271.5px;color:#1b1b1b;letter-spacing:-0.112px;">DistanceFieldConverter.fx</span>
<svg style="left:122px;top:291.5px;" width="14" height="16" viewBox="0 0 14 16"><path d="M.500 2.500l1.300-1.200 1.300 1.200 1.300-1.200 1.300 1.200 1.300-1.200 1.300 1.200 1.300-1.200 2.100 2.100v12h-12z" fill="#fff" stroke="#7f7f7f" stroke-width="1"/><path d="M2 5.500h9.500M2 7.500h9.500M2 9.500h9.500M2 11.500h9.500M2 13.500h9.500" stroke="#c4cbdb" stroke-width="1"/></svg>
<span class="t u" style="left:140.4px;top:289.5px;color:#1b1b1b;letter-spacing:0.223px;">MemCopy.fx</span>
<svg style="left:122px;top:309.5px;" width="14" height="16" viewBox="0 0 14 16"><path d="M.500 2.500l1.300-1.200 1.300 1.200 1.300-1.200 1.300 1.200 1.300-1.200 1.300 1.200 1.300-1.200 2.100 2.100v12h-12z" fill="#fff" stroke="#7f7f7f" stroke-width="1"/><path d="M2 5.500h9.500M2 7.500h9.500M2 9.500h9.500M2 11.500h9.500M2 13.500h9.500" stroke="#c4cbdb" stroke-width="1"/></svg>
<span class="t u" style="left:140.4px;top:307.5px;color:#1b1b1b;letter-spacing:-0.290px;">RayBundles.fx</span>
<svg style="left:122px;top:327.5px;" width="14" height="16" viewBox="0 0 14 16"><path d="M.500 2.500l1.300-1.200 1.300 1.200 1.300-1.200 1.300 1.200 1.300-1.200 1.300 1.200 1.300-1.200 2.100 2.100v12h-12z" fill="#fff" stroke="#7f7f7f" stroke-width="1"/><path d="M2 5.500h9.500M2 7.500h9.500M2 9.500h9.500M2 11.500h9.500M2 13.500h9.500" stroke="#c4cbdb" stroke-width="1"/></svg>
<span class="t u" style="left:140.4px;top:325.5px;color:#1b1b1b;letter-spacing:-0.445px;">RayGen.fx</span>
<svg style="left:122px;top:345.5px;" width="14" height="16" viewBox="0 0 14 16"><path d="M.500 2.500l1.300-1.200 1.300 1.200 1.300-1.200 1.300 1.200 1.300-1.200 1.300 1.200 1.300-1.200 2.100 2.100v12h-12z" fill="#fff" stroke="#7f7f7f" stroke-width="1"/><path d="M2 5.500h9.500M2 7.500h9.500M2 9.500h9.500M2 11.500h9.500M2 13.500h9.500" stroke="#c4cbdb" stroke-width="1"/></svg>
<span class="t u" style="left:140.4px;top:343.5px;color:#1b1b1b;letter-spacing:-0.309px;">RayGrid.fx</span>
<svg style="left:122px;top:363.5px;" width="14" height="16" viewBox="0 0 14 16"><path d="M.500 2.500l1.300-1.200 1.300 1.200 1.300-1.200 1.300 1.200 1.300-1.200 1.300 1.200 1.300-1.200 2.100 2.100v12h-12z" fill="#fff" stroke="#7f7f7f" stroke-width="1"/><path d="M2 5.500h9.500M2 7.500h9.500M2 9.500h9.500M2 11.500h9.500M2 13.500h9.500" stroke="#c4cbdb" stroke-width="1"/></svg>
<span class="t u" style="left:140.4px;top:361.5px;color:#1b1b1b;letter-spacing:-0.322px;">VoxelRep.fx</span>
<svg style="left:101px;top:382.5px;" width="16" height="14" viewBox="0 0 16 14"><path d="M.500 12.500v-10.500h5l1.500 1.500h6v3" fill="#f7e08a" stroke="#b8922a"/><path d="M.700 12.500l3-6.500h11.800l-3.200 6.500z" fill="#fdf0b0" stroke="#b8922a"/></svg>
<svg style="left:81px;top:386.5px;" width="7" height="7" viewBox="0 0 7 7"><path d="M6 .500v5.500h-5.500z" fill="#404040" stroke="#404040" stroke-width=".8"/></svg>
<span class="t u" style="left:121.4px;top:379.5px;color:#1b1b1b;letter-spacing:0.011px;">Lights</span>
<svg style="left:122px;top:399.5px;" width="14" height="16" viewBox="0 0 14 16"><path d="M.500 2.500l1.300-1.200 1.300 1.200 1.300-1.200 1.300 1.200 1.300-1.200 1.300 1.200 1.300-1.200 2.100 2.100v12h-12z" fill="#fff" stroke="#7f7f7f" stroke-width="1"/><path d="M2 5.500h9.500M2 7.500h9.500M2 9.500h9.500M2 11.500h9.500M2 13.500h9.500" stroke="#c4cbdb" stroke-width="1"/></svg>
<span class="t u" style="left:140.4px;top:397.5px;color:#1b1b1b;letter-spacing:0.053px;">DirectionalLight.fx</span>
<svg style="left:101px;top:418.5px;" width="16" height="14" viewBox="0 0 16 14"><path d="M.500 12.500v-10.500h5l1.500 1.500h6v3" fill="#f7e08a" stroke="#b8922a"/><path d="M.700 12.500l3-6.500h11.800l-3.200 6.500z" fill="#fdf0b0" stroke="#b8922a"/></svg>
<svg style="left:81px;top:422.5px;" width="7" height="7" viewBox="0 0 7 7"><path d="M6 .500v5.500h-5.500z" fill="#404040" stroke="#404040" stroke-width=".8"/></svg>
<span class="t u" style="left:121.4px;top:415.5px;color:#1b1b1b;letter-spacing:-0.021px;">Materials</span>
<div style="left:118px;top:435.0px;width:84px;height:17px;background:linear-gradient(180deg,#f8f8f8,#e5e5e5);border:1px solid #d9d9d9;border-radius:3px;box-sizing:border-box;"></div>
<svg style="left:122px;top:435.5px;" width="14" height="16" viewBox="0 0 14 16"><path d="M.500 2.500l1.300-1.200 1.300 1.200 1.300-1.200 1.300 1.200 1.300-1.200 1.300 1.200 1.300-1.200 2.100 2.100v12h-12z" fill="#fff" stroke="#7f7f7f" stroke-width="1"/><path d="M2 5.500h9.500M2 7.500h9.500M2 9.500h9.500M2 11.500h9.500M2 13.500h9.500" stroke="#c4cbdb" stroke-width="1"/></svg>
<span class="t u" style="left:140.4px;top:433.5px;color:#1b1b1b;letter-spacing:-0.000px;">Textured.fx</span>
<svg style="left:101px;top:454.5px;" width="16" height="14" viewBox="0 0 16 14"><path d="M.500 12.500v-10.500h5l1.500 1.500h6v3" fill="#f7e08a" stroke="#b8922a"/><path d="M.700 12.500l3-6.500h11.800l-3.200 6.500z" fill="#fdf0b0" stroke="#b8922a"/></svg>
<svg style="left:81px;top:458.5px;" width="7" height="7" viewBox="0 0 7 7"><path d="M6 .500v5.500h-5.500z" fill="#404040" stroke="#404040" stroke-width=".8"/></svg>
<span class="t u" style="left:121.4px;top:451.5px;color:#1b1b1b;letter-spacing:-0.013px;">Pipeline</span>
<svg style="left:122px;top:471.5px;" width="14" height="16" viewBox="0 0 14 16"><path d="M.500 2.500l1.300-1.200 1.300 1.200 1.300-1.200 1.300 1.200 1.300-1.200 1.300 1.200 1.300-1.200 2.100 2.100v12h-12z" fill="#fff" stroke="#7f7f7f" stroke-width="1"/><path d="M2 5.500h9.500M2 7.500h9.500M2 9.500h9.500M2 11.500h9.500M2 13.500h9.500" stroke="#c4cbdb" stroke-width="1"/></svg>
<span class="t u" style="left:140.4px;top:469.5px;color:#1b1b1b;letter-spacing:-0.049px;">CompactRay.fx</span>
<svg style="left:122px;top:489.5px;" width="14" height="16" viewBox="0 0 14 16"><path d="M.500 2.500l1.300-1.200 1.300 1.200 1.300-1.200 1.300 1.200 1.300-1.200 1.300 1.200 1.300-1.200 2.100 2.100v12h-12z" fill="#fff" stroke="#7f7f7f" stroke-width="1"/><path d="M2 5.500h9.500M2 7.500h9.500M2 9.500h9.500M2 11.500h9.500M2 13.500h9.500" stroke="#c4cbdb" stroke-width="1"/></svg>
<span class="t u" style="left:140.4px;top:487.5px;color:#1b1b1b;letter-spacing:0.149px;">Config.fx</span>
<svg style="left:122px;top:507.5px;" width="14" height="16" viewBox="0 0 14 16"><path d="M.500 2.500l1.300-1.200 1.300 1.200 1.300-1.200 1.300 1.200 1.300-1.200 1.300 1.200 1.300-1.200 2.100 2.100v12h-12z" fill="#fff" stroke="#7f7f7f" stroke-width="1"/><path d="M2 5.500h9.500M2 7.500h9.500M2 9.500h9.500M2 11.500h9.500M2 13.500h9.500" stroke="#c4cbdb" stroke-width="1"/></svg>
<span class="t u" style="left:140.4px;top:505.5px;color:#1b1b1b;letter-spacing:-0.080px;">Pipeline.fx</span>
<svg style="left:122px;top:525.5px;" width="14" height="16" viewBox="0 0 14 16"><path d="M.500 2.500l1.300-1.200 1.300 1.200 1.300-1.200 1.300 1.200 1.300-1.200 1.300 1.200 1.300-1.200 2.100 2.100v12h-12z" fill="#fff" stroke="#7f7f7f" stroke-width="1"/><path d="M2 5.500h9.500M2 7.500h9.500M2 9.500h9.500M2 11.500h9.500M2 13.500h9.500" stroke="#c4cbdb" stroke-width="1"/></svg>
<span class="t u" style="left:140.4px;top:523.5px;color:#1b1b1b;letter-spacing:-0.287px;">Ray.fx</span>
<div style="left:122px;top:544px;width:13px;height:1px;background:#b0b0b0;"></div>
<div style="left:79px;top:545px;width:65px;height:21px;background:#fff;border-radius:0 0 3px 3px;"></div>
<span class="t u" style="left:38.4px;top:546px;color:#fff;letter-spacing:-0.247px;">Solu...</span>
<svg style="left:19px;top:548px;" width="15" height="15" viewBox="0 0 15 15"><rect x=".500" y=".500" width="14" height="14" fill="#fff" stroke="#c0c4cc"/><circle cx="8.500" cy="6" r="3.200" fill="none" stroke="#8a8f98" stroke-width="1.200"/><path d="M6.500 8.500l-3.500 3.500" stroke="#8a8f98" stroke-width="1.600"/></svg>
<span class="t u" style="left:103.4px;top:546px;color:#1b1b1b;letter-spacing:-0.247px;">Solu...</span>
<svg style="left:84px;top:548px;" width="17" height="16" viewBox="0 0 17 16"><rect x="5.500" y=".500" width="10" height="9" fill="#fff" stroke="#6f86b5"/><rect x="6" y="1" width="9" height="2" fill="#5b8fe0"/><path d="M.500 4.500h5v4h-5z" fill="#f3d067" stroke="#a87c14" stroke-width=".8"/><circle cx="8" cy="9" r="3" fill="#d8ecff" stroke="#5a6a86"/><path d="M10 11.500l4 3.500" stroke="#d7a13a" stroke-width="2"/></svg>
<span class="t u" style="left:167.4px;top:546px;color:#fff;letter-spacing:-0.359px;">Clas...</span>
<svg style="left:148px;top:548px;" width="17" height="16" viewBox="0 0 17 16"><rect x=".500" y="3.500" width="12" height="8" fill="#fff" stroke="#8a96ad"/><path d="M2 4l3-3 3 3-3 3z" fill="#f0c23c" stroke="#a87c14" stroke-width=".6"/><path d="M8 7l3.500-3.500 3.500 3.500-3.500 3.500z" fill="#e070d0" stroke="#8a3a86" stroke-width=".6"/><path d="M9 12.500l2.500-2.500 2.500 2.500-2.500 2.500z" fill="#4d8fe0" stroke="#2a4f9a" stroke-width=".6"/></svg>
<span class="t u" style="left:232.4px;top:546px;color:#fff;letter-spacing:-0.123px;">Prop...</span>
<svg style="left:213px;top:548px;" width="17" height="16" viewBox="0 0 17 16"><rect x=".500" y=".500" width="12" height="9" fill="#fff" stroke="#6f86b5"/><rect x="1" y="1" width="11" height="2" fill="#5b8fe0"/><rect x="3.500" y="5.500" width="11" height="7" fill="#fff" stroke="#7b869c"/><rect x="6.500" y="8.500" width="9" height="6" fill="#fff" stroke="#7b869c"/><path d="M8 10.500h1.500M10.500 10.500h4M8 12.500h1.500M10.500 12.500h4" stroke="#555" stroke-width="1"/></svg>
<span class="t u" style="left:297.4px;top:546px;color:#fff;letter-spacing:-0.343px;">Tea...</span>
<svg style="left:277px;top:548px;" width="17" height="16" viewBox="0 0 17 16"><rect x=".500" y=".500" width="13" height="9" fill="#fff" stroke="#6f86b5"/><rect x="1" y="1" width="12" height="2" fill="#5b8fe0"/><rect x="6" y="8" width="2.500" height="7" fill="#2f7de0"/><rect x="9.500" y="6" width="2.500" height="9" fill="#3da33d"/><rect x="13" y="8" width="2.500" height="7" fill="#d8452f"/><circle cx="7.200" cy="7" r="1.300" fill="#2f7de0"/><circle cx="10.700" cy="5" r="1.300" fill="#3da33d"/><circle cx="14.200" cy="7" r="1.300" fill="#d8452f"/></svg>
<div style="left:488px;top:83px;width:126px;height:23px;background:linear-gradient(180deg,#fffdf3 0,#fff7d8 45%,#ffeaa6 55%,#ffe9a8 100%);border-radius:3px 3px 0 0;"></div>
<svg style="left:495px;top:86px;" width="14" height="16" viewBox="0 0 14 16"><path d="M.500 2.500l1.300-1.200 1.300 1.200 1.300-1.200 1.300 1.200 1.300-1.200 1.300 1.200 1.300-1.200 2.100 2.100v12h-12z" fill="#fff" stroke="#7f7f7f" stroke-width="1"/><path d="M2 5.500h9.500M2 7.500h9.500M2 9.500h9.500M2 11.500h9.500M2 13.500h9.500" stroke="#c4cbdb" stroke-width="1"/></svg>
<span class="t u" style="left:512.7px;top:84px;color:#1b1b1b;letter-spacing:-0.309px;">RayGrid.fx</span>
<svg style="left:596px;top:90px;" width="10" height="10" viewBox="0 0 10 10"><path d="M1 1l8 8M9 1l-8 8" stroke="#3a3a3a" stroke-width="1.400"/></svg>
<svg style="left:365px;top:86px;" width="14" height="16" viewBox="0 0 14 16"><path d="M.500 2.500l1.300-1.200 1.300 1.200 1.300-1.200 1.300 1.200 1.300-1.200 1.300 1.200 1.300-1.200 2.100 2.100v12h-12z" fill="#fff" stroke="#7f7f7f" stroke-width="1"/><path d="M2 5.500h9.500M2 7.500h9.500M2 9.500h9.500M2 11.500h9.500M2 13.500h9.500" stroke="#c4cbdb" stroke-width="1"/></svg>
<span class="t u" style="left:382.4px;top:84px;color:#fff;letter-spacing:-0.000px;">Textured.fx</span>
<svg style="left:620px;top:86px;" width="14" height="16" viewBox="0 0 14 16"><path d="M.500 2.500l1.300-1.200 1.300 1.200 1.300-1.200 1.300 1.200 1.300-1.200 1.300 1.200 1.300-1.200 2.100 2.100v12h-12z" fill="#fff" stroke="#7f7f7f" stroke-width="1"/><path d="M2 5.500h9.500M2 7.500h9.500M2 9.500h9.500M2 11.500h9.500M2 13.500h9.500" stroke="#c4cbdb" stroke-width="1"/></svg>
<span class="t u" style="left:637.4px;top:84px;color:#fff;letter-spacing:-0.080px;">Pipeline.fx</span>
<svg style="left:746px;top:86px;" width="14" height="16" viewBox="0 0 14 16"><path d="M.500 2.500l1.300-1.200 1.300 1.200 1.300-1.200 1.300 1.200 1.300-1.200 1.300 1.200 1.300-1.200 2.100 2.100v12h-12z" fill="#fff" stroke="#7f7f7f" stroke-width="1"/><path d="M2 5.500h9.500M2 7.500h9.500M2 9.500h9.500M2 11.500h9.500M2 13.500h9.500" stroke="#c4cbdb" stroke-width="1"/></svg>
<span class="t u" style="left:763.3px;top:84px;color:#fff;letter-spacing:0.223px;">MemCopy.fx</span>
<svg style="left:886px;top:86px;" width="14" height="16" viewBox="0 0 14 16"><path d="M.500 2.500l1.300-1.200 1.300 1.200 1.300-1.200 1.300 1.200 1.300-1.200 1.300 1.200 1.300-1.200 2.100 2.100v12h-12z" fill="#fff" stroke="#7f7f7f" stroke-width="1"/><path d="M2 5.500h9.500M2 7.500h9.500M2 9.500h9.500M2 11.500h9.500M2 13.500h9.500" stroke="#c4cbdb" stroke-width="1"/></svg>
<span class="t u" style="left:903.6px;top:84px;color:#fff;letter-spacing:-0.163px;">SpecTextured.fx</span>
<svg style="left:1102px;top:94px;" width="9" height="5" viewBox="0 0 9 5"><path d="M0 0h9l-4.500 5z" fill="#d5dbe6"/></svg>
<div style="left:343px;top:105px;width:771px;height:461px;background:#ffe9a8;border-radius:3px 0 0 0;"></div>
<div style="left:344px;top:110px;width:770px;height:22px;background:#dfe4ee;"></div>
<div style="left:344px;top:111px;width:383px;height:20px;background:linear-gradient(180deg,#fdfdfe,#eef1f6);border:1px solid #9aa5b8;box-sizing:border-box;"></div>
<div style="left:729px;top:111px;width:384px;height:20px;background:linear-gradient(180deg,#fdfdfe,#eef1f6);border:1px solid #9aa5b8;box-sizing:border-box;"></div>
<span class="t u" style="left:349.4px;top:111px;color:#1b1b1b;letter-spacing:-0.106px;">(Unknown Scope)</span>
<svg style="left:718px;top:120px;" width="6" height="4" viewBox="0 0 6 4"><path d="M0 0h6l-3 3.500z" fill="#222"/></svg>
<svg style="left:1103px;top:120px;" width="6" height="4" viewBox="0 0 6 4"><path d="M0 0h6l-3 3.500z" fill="#222"/></svg>
<div style="left:344px;top:132px;width:653px;height:414px;background:#fff;"></div>
<div style="left:344px;top:132px;width:16px;height:414px;background:#f0f0f0;"></div>
<span class="t m c" style="left:381px;top:138px;width:616px;overflow:hidden;"><span style="color:#0000ff">static</span> <span style="color:#0000ff">const</span> uint MaxSliceMaskCount <span style="color:#8f8700">=</span> <span style="color:#17868f">4</span><span style="color:#8f8700">;</span></span>
<span class="t m c" style="left:381px;top:153px;width:616px;overflow:hidden;"><span style="color:#0000ff">static</span> <span style="color:#0000ff">const</span> uint MaxSliceMaskQCount <span style="color:#8f8700">=</span> MaxSliceMaskCount <span style="color:#8f8700">/</span> <span style="color:#17868f">4</span><span style="color:#8f8700">;</span></span>
<span class="t m c" style="left:381px;top:183px;width:616px;overflow:hidden;">RWStructuredBuffer<span style="color:#8f8700">&lt;</span>RayDesc<span style="color:#8f8700">&gt;</span> RayQueueUAV <span style="color:#8f8700">:</span> RayQueueUAV<span style="color:#8f8700">;</span></span>
<span class="t m c" style="left:381px;top:198px;width:616px;overflow:hidden;">StructuredBuffer<span style="color:#8f8700">&lt;</span>TracedGeometry<span style="color:#8f8700">&gt;</span> RayGeometry <span style="color:#8f8700">:</span> RayGeometry<span style="color:#8f8700">;</span></span>
<span class="t m c" style="left:381px;top:213px;width:616px;overflow:hidden;">Texture2DArray<span style="color:#8f8700">&lt;</span>uint4<span style="color:#8f8700">&gt;</span> SliceMap <span style="color:#8f8700">:</span> SliceMap<span style="color:#8f8700">;</span></span>
<span class="t m c" style="left:381px;top:228px;width:616px;overflow:hidden;">Texture3D<span style="color:#8f8700">&lt;</span>uint<span style="color:#8f8700">&gt;</span> Voxels <span style="color:#8f8700">:</span> Voxels<span style="color:#8f8700">;</span></span>
<span class="t m c" style="left:381px;top:258px;width:616px;overflow:hidden;">RWByteAddressBuffer RayGridIdxListUAV <span style="color:#8f8700">:</span> RayGridIdxListUAV<span style="color:#8f8700">;</span></span>
<span class="t m c" style="left:381px;top:273px;width:616px;overflow:hidden;">RWByteAddressBuffer RayLinkListUAV <span style="color:#8f8700">:</span> RayLinkListUAV<span style="color:#8f8700">;</span></span>
<span class="t m c" style="left:381px;top:288px;width:616px;overflow:hidden;">RWStructuredBuffer<span style="color:#8f8700">&lt;</span>uint<span style="color:#8f8700">&gt;</span> CounterUAV <span style="color:#8f8700">:</span> CounterUAV<span style="color:#8f8700">;</span></span>
<span class="t m c" style="left:381px;top:318px;width:616px;overflow:hidden;"><span style="color:#0000ff">#ifdef</span> BOUNDED_TRAVERSAL</span>
<span class="t m c" style="left:381px;top:333px;width:616px;overflow:hidden;">uint4 RayExitNodeLimitsMinMax <span style="color:#8f8700">:</span> BoundedTraversalLimits<span style="color:#8f8700">;</span></span>
<span class="t m c" style="left:381px;top:348px;width:616px;overflow:hidden;"><span style="color:#0000ff">#endif</span></span>
<span class="t m c" style="left:381px;top:378px;width:616px;overflow:hidden;">uint RayGridIdxBaseAddress <span style="color:#8f8700">:</span> RayGridIdxBaseAddress<span style="color:#8f8700">;</span></span>
<span class="t m c" style="left:381px;top:393px;width:616px;overflow:hidden;">uint RayLinkBaseAddress <span style="color:#8f8700">:</span> RayLinkBaseAddress<span style="color:#8f8700">;</span></span>
<span class="t m c" style="left:381px;top:423px;width:616px;overflow:hidden;"><span style="color:#0000ff">static</span> <span style="color:#0000ff">const</span> uint MaxUByte <span style="color:#8f8700">=</span> <span style="color:#8f8700">(</span><span style="color:#17868f">1</span> <span style="color:#8f8700">&lt;</span><span style="color:#8f8700">&lt;</span> <span style="color:#17868f">8</span><span style="color:#8f8700">)</span> <span style="color:#8f8700">-</span> <span style="color:#17868f">1</span><span style="color:#8f8700">;</span></span>
<span class="t m c" style="left:381px;top:438px;width:616px;overflow:hidden;"><span style="color:#0000ff">static</span> <span style="color:#0000ff">const</span> uint MaxUInt24 <span style="color:#8f8700">=</span> <span style="color:#8f8700">(</span><span style="color:#17868f">1</span> <span style="color:#8f8700">&lt;</span><span style="color:#8f8700">&lt;</span> <span style="color:#17868f">24</span><span style="color:#8f8700">)</span> <span style="color:#8f8700">-</span> <span style="color:#17868f">1</span><span style="color:#8f8700">;</span></span>
<span class="t m c" style="left:381px;top:468px;width:616px;overflow:hidden;"><span style="color:#8f8700">[</span>numthreads<span style="color:#8f8700">(</span>GroupSize<span style="color:#8f8700">,</span><span style="color:#17868f">1</span><span style="color:#8f8700">,</span><span style="color:#17868f">1</span><span style="color:#8f8700">)</span><span style="color:#8f8700">]</span></span>
<span class="t m c" style="left:381px;top:483px;width:616px;overflow:hidden;"><span style="color:#0000ff">void</span> CSScatter<span style="color:#8f8700">(</span>uint dispatchIdx <span style="color:#8f8700">:</span> SV_DispatchThreadID<span style="color:#8f8700">,</span> uint threadIdx <span style="color:#8f8700">:</span> SV_GroupIndex<span style="color:#8f8700">,</span> uint groupIdx <span style="color:#8f8700">:</span> SV_GroupID<span style="color:#8f8700">)</span></span>
<span class="t m c" style="left:381px;top:498px;width:616px;overflow:hidden;"><span style="color:#8f8700">{</span></span>
<span class="t m c" style="left:381px;top:513px;width:616px;overflow:hidden;">    uint rayOffset <span style="color:#8f8700">=</span> <span style="color:#17868f">0</span><span style="color:#8f8700">;</span></span>
<span class="t m c" style="left:381px;top:528px;width:616px;overflow:hidden;">    uint rayCount <span style="color:#8f8700">=</span> RaySet<span style="color:#8f8700">.</span>RayCount<span style="color:#8f8700">;</span></span>
<div style="left:375px;top:132px;width:1px;height:188px;background:#a5a5a5;"></div>
<div style="left:375px;top:319px;width:5px;height:1px;background:#a5a5a5;"></div>
<svg style="left:370px;top:323px;" width="9" height="9" viewBox="0 0 9 9"><rect x=".5" y=".5" width="8" height="8" fill="#fff" stroke="#8a8a8a"/><path d="M2 4.500h5" stroke="#444" stroke-width="1"/></svg>
<div style="left:375px;top:332px;width:1px;height:18px;background:#a5a5a5;"></div>
<div style="left:375px;top:349px;width:5px;height:1px;background:#a5a5a5;"></div>
<svg style="left:370px;top:488px;" width="9" height="9" viewBox="0 0 9 9"><rect x=".5" y=".5" width="8" height="8" fill="#fff" stroke="#8a8a8a"/><path d="M2 4.500h5" stroke="#444" stroke-width="1"/></svg>
<div style="left:375px;top:497px;width:1px;height:49px;background:#a5a5a5;"></div>
<div style="left:344px;top:546px;width:653px;height:16px;background:#efefef;"></div>
<div style="left:344px;top:546px;width:58px;height:16px;background:#fff;"></div>
<span class="t u" style="left:346.9px;top:544px;color:#1b1b1b;letter-spacing:-0.546px;">100 %</span>
<svg style="left:394px;top:553px;" width="6" height="4" viewBox="0 0 6 4"><path d="M0 0h6l-3 3.500z" fill="#222"/></svg>
<svg style="left:409px;top:550px;" width="4" height="7" viewBox="0 0 4 7"><path d="M4 0l-4 3.500 4 3.500z" fill="#7a7a7a"/></svg>
<svg style="left:985px;top:550px;" width="4" height="7" viewBox="0 0 4 7"><path d="M0 0l4 3.500-4 3.500z" fill="#505050"/></svg>
<div style="left:421px;top:547px;width:303px;height:14px;background:linear-gradient(180deg,#f3f3f3,#dedede 50%,#cfcfcf 52%,#dcdcdc);border:1px solid #8e8e8e;border-radius:2px;box-sizing:border-box;"></div>
<div style="left:568px;top:551px;width:1px;height:6px;background:#333;"></div>
<div style="left:571px;top:551px;width:1px;height:6px;background:#333;"></div>
<div style="left:574px;top:551px;width:1px;height:6px;background:#333;"></div>
<div style="left:997px;top:132px;width:117px;height:414px;background:#f0f0f0;"></div>
<div style="left:997px;top:132px;width:117px;height:16px;background:linear-gradient(180deg,#e8ebf2,#d5dae5);border:1px solid #b9bfcc;box-sizing:border-box;"></div>
<svg style="left:1050px;top:134px;" width="10" height="13" viewBox="0 0 10 13"><path d="M5 0l3 3.500h-6zM5 13l3-3.500h-6zM5 2v9" fill="#111" stroke="#111" stroke-width="1.200"/><path d="M0 5.500h10M0 7.500h10" stroke="#111" stroke-width="1"/></svg>
<div style="left:997px;top:171px;width:117px;height:34px;background:#fff;border:1px solid #000;border-radius:3px;box-sizing:border-box;"></div>
<div style="left:1010px;top:168px;width:3px;height:4px;background:#1010d0;"></div>
<svg style="left:0;top:0;" width="1148" height="560" viewBox="0 0 1148 560" fill="none" stroke-width="1.250"><path d="M1013.0 150.6h22" stroke="#000" stroke-opacity="0.42" stroke-dasharray="5 1.3 7 1.3 5 1.3 5 1.3"/><path d="M1013.0 154.0h5" stroke="#0000ff" stroke-opacity="0.7" stroke-dasharray="7 1.3 7 1.3 3 1.3 3 1.3"/><path d="M1019.5 154.0h25" stroke="#a31515" stroke-opacity="0.42" stroke-dasharray="7 1.3 5 1.3 9 1.3 7 1.3"/><path d="M1013.0 157.4h5" stroke="#0000ff" stroke-opacity="0.7" stroke-dasharray="3 1.3 2 1.3 5 1.3 4 1.3"/><path d="M1019.5 157.4h27" stroke="#a31515" stroke-opacity="0.42" stroke-dasharray="3 1.3 2 1.3 7 1.3 9 1.3"/><path d="M1013.0 160.9h5" stroke="#0000ff" stroke-opacity="0.7" stroke-dasharray="9 1.3 2 1.3 7 1.3 5 1.3"/><path d="M1019.5 160.9h13" stroke="#a31515" stroke-opacity="0.42" stroke-dasharray="5 1.3 9 1.3 9 1.3 7 1.3"/><path d="M1013.0 164.3h15" stroke="#008000" stroke-opacity="0.42" stroke-dasharray="9 1.3 3 1.3 7 1.3 2 1.3"/><path d="M1013.0 167.7h12" stroke="#0000ff" stroke-opacity="0.7" stroke-dasharray="7 1.3 2 1.3 2 1.3 2 1.3"/><path d="M1026.5 167.7h18" stroke="#000" stroke-opacity="0.42" stroke-dasharray="3 1.3 3 1.3 7 1.3 2 1.3"/><path d="M1013.0 171.1h12" stroke="#0000ff" stroke-opacity="0.7" stroke-dasharray="5 1.3 4 1.3 5 1.3 7 1.3"/><path d="M1026.5 171.1h30" stroke="#000" stroke-opacity="0.42" stroke-dasharray="3 1.3 7 1.3 3 1.3 9 1.3"/><path d="M1013.0 174.5h12" stroke="#0000ff" stroke-opacity="0.7" stroke-dasharray="4 1.3 5 1.3 2 1.3 9 1.3"/><path d="M1026.5 174.5h28" stroke="#000" stroke-opacity="0.42" stroke-dasharray="2 1.3 5 1.3 9 1.3 4 1.3"/><path d="M1013.0 178.0h48" stroke="#000" stroke-opacity="0.42" stroke-dasharray="5 1.3 7 1.3 2 1.3 9 1.3"/><path d="M1013.0 181.4h47" stroke="#000" stroke-opacity="0.42" stroke-dasharray="4 1.3 4 1.3 3 1.3 7 1.3"/><path d="M1013.0 184.8h42" stroke="#000" stroke-opacity="0.42" stroke-dasharray="4 1.3 2 1.3 2 1.3 7 1.3"/><path d="M1013.0 188.2h45" stroke="#000" stroke-opacity="0.42" stroke-dasharray="2 1.3 5 1.3 2 1.3 4 1.3"/><path d="M1013.0 191.6h40" stroke="#000" stroke-opacity="0.42" stroke-dasharray="5 1.3 2 1.3 2 1.3 9 1.3"/><path d="M1013.0 195.1h10" stroke="#0000ff" stroke-opacity="0.7" stroke-dasharray="2 1.3 3 1.3 3 1.3 2 1.3"/><path d="M1024.5 195.1h16" stroke="#000" stroke-opacity="0.42" stroke-dasharray="5 1.3 5 1.3 9 1.3 5 1.3"/><path d="M1013.0 198.5h5" stroke="#0000ff" stroke-opacity="0.7" stroke-dasharray="5 1.3 2 1.3 7 1.3 9 1.3"/><path d="M1019.5 198.5h87" stroke="#000" stroke-opacity="0.42" stroke-dasharray="3 1.3 9 1.3 4 1.3 4 1.3"/><path d="M1016.3 201.9h26" stroke="#000" stroke-opacity="0.42" stroke-dasharray="2 1.3 4 1.3 4 1.3 2 1.3"/><path d="M1016.3 205.3h14" stroke="#000" stroke-opacity="0.42" stroke-dasharray="9 1.3 2 1.3 2 1.3 2 1.3"/><path d="M1013.0 208.7h38" stroke="#000" stroke-opacity="0.42" stroke-dasharray="7 1.3 3 1.3 5 1.3 7 1.3"/><path d="M1013.0 212.2h38" stroke="#008000" stroke-opacity="0.5" stroke-dasharray="5 1.3 2 1.3 5 1.3 5 1.3"/><path d="M1013.0 215.6h60" stroke="#000" stroke-opacity="0.42" stroke-dasharray="7 1.3 4 1.3 2 1.3 3 1.3"/><path d="M1013.0 219.0h12" stroke="#000" stroke-opacity="0.42" stroke-dasharray="3 1.3 5 1.3 4 1.3 2 1.3"/><path d="M1016.3 222.4h20" stroke="#000" stroke-opacity="0.42" stroke-dasharray="2 1.3 2 1.3 2 1.3 3 1.3"/><path d="M1016.3 225.8h32" stroke="#000" stroke-opacity="0.42" stroke-dasharray="4 1.3 4 1.3 7 1.3 5 1.3"/><path d="M1013.0 229.3h20" stroke="#000" stroke-opacity="0.42" stroke-dasharray="3 1.3 9 1.3 3 1.3 4 1.3"/><path d="M1013.0 232.7h12" stroke="#000" stroke-opacity="0.42" stroke-dasharray="9 1.3 9 1.3 7 1.3 3 1.3"/><path d="M1016.3 236.1h32" stroke="#000" stroke-opacity="0.42" stroke-dasharray="2 1.3 5 1.3 2 1.3 2 1.3"/><path d="M1016.3 239.5h46" stroke="#000" stroke-opacity="0.42" stroke-dasharray="9 1.3 5 1.3 4 1.3 5 1.3"/><path d="M1013.0 242.9h28" stroke="#000" stroke-opacity="0.42" stroke-dasharray="3 1.3 9 1.3 2 1.3 3 1.3"/><path d="M1013.0 246.4h14" stroke="#000" stroke-opacity="0.42" stroke-dasharray="3 1.3 9 1.3 2 1.3 2 1.3"/><path d="M1013.0 249.8h8" stroke="#000" stroke-opacity="0.42" stroke-dasharray="2 1.3 3 1.3 4 1.3 4 1.3"/><path d="M1013.0 253.2h18" stroke="#000" stroke-opacity="0.42" stroke-dasharray="3 1.3 5 1.3 4 1.3 9 1.3"/><path d="M1013.0 256.6h8" stroke="#000" stroke-opacity="0.42" stroke-dasharray="5 1.3 4 1.3 9 1.3 4 1.3"/><path d="M1013.0 260.0h24" stroke="#000" stroke-opacity="0.42" stroke-dasharray="2 1.3 9 1.3 4 1.3 4 1.3"/><path d="M1013.0 263.5h24" stroke="#000" stroke-opacity="0.42" stroke-dasharray="7 1.3 4 1.3 9 1.3 2 1.3"/><path d="M1013.0 266.9h18" stroke="#000" stroke-opacity="0.42" stroke-dasharray="2 1.3 9 1.3 5 1.3 2 1.3"/><path d="M1016.3 270.3h24" stroke="#000" stroke-opacity="0.42" stroke-dasharray="7 1.3 2 1.3 7 1.3 9 1.3"/><path d="M1013.0 273.7h10" stroke="#000" stroke-opacity="0.42" stroke-dasharray="2 1.3 9 1.3 2 1.3 4 1.3"/><path d="M1016.3 277.1h46" stroke="#008000" stroke-opacity="0.5" stroke-dasharray="9 1.3 7 1.3 5 1.3 5 1.3"/><path d="M1016.3 280.6h60" stroke="#0000ff" stroke-opacity="0.5" stroke-dasharray="7 1.3 2 1.3 4 1.3 7 1.3"/><path d="M1013.0 284.0h46" stroke="#000" stroke-opacity="0.42" stroke-dasharray="2 1.3 5 1.3 7 1.3 9 1.3"/><path d="M1013.0 287.4h18" stroke="#000" stroke-opacity="0.42" stroke-dasharray="4 1.3 3 1.3 9 1.3 7 1.3"/><path d="M1013.0 290.8h38" stroke="#000" stroke-opacity="0.42" stroke-dasharray="5 1.3 5 1.3 3 1.3 4 1.3"/><path d="M1013.0 294.2h38" stroke="#000" stroke-opacity="0.42" stroke-dasharray="5 1.3 3 1.3 3 1.3 5 1.3"/><path d="M1016.3 297.7h12" stroke="#000" stroke-opacity="0.42" stroke-dasharray="3 1.3 5 1.3 4 1.3 2 1.3"/><path d="M1016.3 301.1h10" stroke="#000" stroke-opacity="0.42" stroke-dasharray="5 1.3 5 1.3 4 1.3 3 1.3"/><path d="M1019.6 304.5h24" stroke="#0000ff" stroke-opacity="0.5" stroke-dasharray="9 1.3 4 1.3 9 1.3 7 1.3"/><path d="M1019.6 307.9h16" stroke="#000" stroke-opacity="0.42" stroke-dasharray="7 1.3 2 1.3 9 1.3 9 1.3"/><path d="M1022.9 311.3h38" stroke="#000" stroke-opacity="0.42" stroke-dasharray="7 1.3 2 1.3 9 1.3 3 1.3"/><path d="M1022.9 314.8h60" stroke="#000" stroke-opacity="0.42" stroke-dasharray="4 1.3 3 1.3 3 1.3 2 1.3"/><path d="M1022.9 318.2h10" stroke="#000" stroke-opacity="0.42" stroke-dasharray="9 1.3 7 1.3 9 1.3 9 1.3"/><path d="M1022.9 321.6h14" stroke="#000" stroke-opacity="0.42" stroke-dasharray="5 1.3 4 1.3 3 1.3 9 1.3"/><path d="M1019.6 328.4h14" stroke="#000" stroke-opacity="0.42" stroke-dasharray="4 1.3 4 1.3 7 1.3 9 1.3"/><path d="M1019.6 331.9h60" stroke="#008000" stroke-opacity="0.5" stroke-dasharray="9 1.3 3 1.3 2 1.3 5 1.3"/><path d="M1022.9 335.3h24" stroke="#000" stroke-opacity="0.42" stroke-dasharray="5 1.3 3 1.3 9 1.3 2 1.3"/><path d="M1026.2 338.7h18" stroke="#000" stroke-opacity="0.42" stroke-dasharray="9 1.3 3 1.3 2 1.3 9 1.3"/><path d="M1026.2 342.1h14" stroke="#000" stroke-opacity="0.42" stroke-dasharray="5 1.3 2 1.3 4 1.3 7 1.3"/><path d="M1029.5 345.5h46" stroke="#000" stroke-opacity="0.42" stroke-dasharray="2 1.3 4 1.3 7 1.3 2 1.3"/><path d="M1032.8 352.4h24" stroke="#000" stroke-opacity="0.42" stroke-dasharray="2 1.3 3 1.3 2 1.3 5 1.3"/><path d="M1032.8 355.8h18" stroke="#0000ff" stroke-opacity="0.5" stroke-dasharray="9 1.3 3 1.3 5 1.3 3 1.3"/><path d="M1029.5 359.2h32" stroke="#000" stroke-opacity="0.42" stroke-dasharray="9 1.3 2 1.3 3 1.3 5 1.3"/><path d="M1029.5 362.6h38" stroke="#0000ff" stroke-opacity="0.5" stroke-dasharray="3 1.3 7 1.3 7 1.3 7 1.3"/><path d="M1032.8 366.1h16" stroke="#000" stroke-opacity="0.42" stroke-dasharray="3 1.3 7 1.3 7 1.3 4 1.3"/><path d="M1032.8 369.5h28" stroke="#008000" stroke-opacity="0.5" stroke-dasharray="2 1.3 7 1.3 2 1.3 7 1.3"/><path d="M1029.5 372.9h20" stroke="#0000ff" stroke-opacity="0.5" stroke-dasharray="7 1.3 7 1.3 2 1.3 5 1.3"/><path d="M1029.5 376.3h28" stroke="#000" stroke-opacity="0.42" stroke-dasharray="5 1.3 5 1.3 5 1.3 4 1.3"/><path d="M1026.2 379.7h18" stroke="#000" stroke-opacity="0.42" stroke-dasharray="5 1.3 5 1.3 7 1.3 4 1.3"/><path d="M1029.5 383.2h16" stroke="#000" stroke-opacity="0.42" stroke-dasharray="3 1.3 9 1.3 2 1.3 2 1.3"/><path d="M1029.5 386.6h38" stroke="#000" stroke-opacity="0.42" stroke-dasharray="4 1.3 4 1.3 9 1.3 4 1.3"/><path d="M1026.2 390.0h24" stroke="#000" stroke-opacity="0.42" stroke-dasharray="9 1.3 7 1.3 2 1.3 7 1.3"/><path d="M1026.2 393.4h20" stroke="#0000ff" stroke-opacity="0.5" stroke-dasharray="2 1.3 5 1.3 9 1.3 5 1.3"/><path d="M1026.2 396.8h14" stroke="#0000ff" stroke-opacity="0.5" stroke-dasharray="9 1.3 7 1.3 9 1.3 3 1.3"/><path d="M1026.2 400.3h46" stroke="#000" stroke-opacity="0.42" stroke-dasharray="9 1.3 4 1.3 3 1.3 4 1.3"/><path d="M1026.2 403.7h60" stroke="#000" stroke-opacity="0.42" stroke-dasharray="3 1.3 2 1.3 3 1.3 3 1.3"/><path d="M1026.2 407.1h20" stroke="#000" stroke-opacity="0.42" stroke-dasharray="2 1.3 5 1.3 5 1.3 7 1.3"/><path d="M1026.2 410.5h20" stroke="#000" stroke-opacity="0.42" stroke-dasharray="9 1.3 9 1.3 2 1.3 2 1.3"/><path d="M1029.5 413.9h10" stroke="#000" stroke-opacity="0.42" stroke-dasharray="9 1.3 7 1.3 9 1.3 4 1.3"/><path d="M1029.5 417.4h24" stroke="#000" stroke-opacity="0.42" stroke-dasharray="2 1.3 2 1.3 2 1.3 7 1.3"/><path d="M1026.2 420.8h14" stroke="#000" stroke-opacity="0.42" stroke-dasharray="3 1.3 2 1.3 3 1.3 3 1.3"/><path d="M1026.2 424.2h32" stroke="#000" stroke-opacity="0.42" stroke-dasharray="2 1.3 3 1.3 9 1.3 5 1.3"/><path d="M1026.2 427.6h20" stroke="#000" stroke-opacity="0.42" stroke-dasharray="5 1.3 5 1.3 7 1.3 4 1.3"/><path d="M1029.5 431.0h38" stroke="#000" stroke-opacity="0.42" stroke-dasharray="9 1.3 2 1.3 3 1.3 3 1.3"/><path d="M1032.8 434.5h20" stroke="#000" stroke-opacity="0.42" stroke-dasharray="3 1.3 7 1.3 3 1.3 2 1.3"/><path d="M1029.5 437.9h10" stroke="#000" stroke-opacity="0.42" stroke-dasharray="9 1.3 9 1.3 5 1.3 7 1.3"/><path d="M1032.8 441.3h16" stroke="#000" stroke-opacity="0.42" stroke-dasharray="2 1.3 9 1.3 9 1.3 3 1.3"/><path d="M1036.1 444.7h18" stroke="#000" stroke-opacity="0.42" stroke-dasharray="7 1.3 9 1.3 4 1.3 5 1.3"/><path d="M1036.1 448.1h46" stroke="#000" stroke-opacity="0.42" stroke-dasharray="3 1.3 2 1.3 4 1.3 4 1.3"/><path d="M1032.8 451.6h38" stroke="#000" stroke-opacity="0.42" stroke-dasharray="7 1.3 2 1.3 3 1.3 4 1.3"/><path d="M1032.8 455.0h14" stroke="#000" stroke-opacity="0.42" stroke-dasharray="9 1.3 5 1.3 7 1.3 3 1.3"/><path d="M1036.1 458.4h24" stroke="#0000ff" stroke-opacity="0.5" stroke-dasharray="9 1.3 3 1.3 9 1.3 2 1.3"/><path d="M1032.8 461.8h32" stroke="#000" stroke-opacity="0.42" stroke-dasharray="2 1.3 9 1.3 3 1.3 4 1.3"/><path d="M1029.5 465.2h38" stroke="#000" stroke-opacity="0.42" stroke-dasharray="5 1.3 2 1.3 2 1.3 4 1.3"/><path d="M1032.8 468.7h28" stroke="#0000ff" stroke-opacity="0.5" stroke-dasharray="7 1.3 5 1.3 7 1.3 7 1.3"/><path d="M1032.8 472.1h60" stroke="#000" stroke-opacity="0.42" stroke-dasharray="9 1.3 2 1.3 7 1.3 7 1.3"/><path d="M1029.5 475.5h12" stroke="#008000" stroke-opacity="0.5" stroke-dasharray="5 1.3 5 1.3 3 1.3 5 1.3"/><path d="M1026.2 478.9h24" stroke="#008000" stroke-opacity="0.5" stroke-dasharray="5 1.3 4 1.3 7 1.3 5 1.3"/><path d="M1029.5 482.3h16" stroke="#0000ff" stroke-opacity="0.5" stroke-dasharray="5 1.3 9 1.3 4 1.3 7 1.3"/><path d="M1029.5 485.8h8" stroke="#000" stroke-opacity="0.42" stroke-dasharray="3 1.3 7 1.3 2 1.3 9 1.3"/><path d="M1032.8 489.2h18" stroke="#000" stroke-opacity="0.42" stroke-dasharray="9 1.3 5 1.3 2 1.3 7 1.3"/><path d="M1036.1 492.6h60" stroke="#000" stroke-opacity="0.42" stroke-dasharray="3 1.3 5 1.3 9 1.3 5 1.3"/><path d="M1036.1 496.0h28" stroke="#000" stroke-opacity="0.42" stroke-dasharray="2 1.3 9 1.3 5 1.3 3 1.3"/><path d="M1036.1 499.4h8" stroke="#000" stroke-opacity="0.42" stroke-dasharray="7 1.3 5 1.3 5 1.3 2 1.3"/><path d="M1032.8 502.9h28" stroke="#000" stroke-opacity="0.42" stroke-dasharray="3 1.3 2 1.3 4 1.3 5 1.3"/><path d="M1036.1 506.3h32" stroke="#000" stroke-opacity="0.42" stroke-dasharray="4 1.3 9 1.3 7 1.3 9 1.3"/><path d="M1036.1 509.7h46" stroke="#000" stroke-opacity="0.42" stroke-dasharray="3 1.3 3 1.3 5 1.3 2 1.3"/></svg>
<div style="left:997px;top:546px;width:117px;height:16px;background:#fff;"></div>
<div style="left:1120px;top:83px;width:21px;height:80px;background:#44587c;border-radius:0 3px 3px 0;"></div>
<svg style="left:1123px;top:86px;" width="15" height="16" viewBox="0 0 15 16"><rect x=".500" y=".500" width="9" height="11" fill="#eef2f8" stroke="#8a96ad"/><path d="M2 3v6M4 3h4M4 5.500h4M4 8h4" stroke="#6a7690" stroke-width=".8"/><path d="M7 6l4-2 2 5-1 5h-4l-2-4z" fill="#f0c23c" stroke="#8a6914" stroke-width=".7"/><rect x="7" y="14" width="6" height="2" fill="#3d9b35"/></svg>
<span class="t u" style="left:1142px;top:106px;color:#fff;letter-spacing:-0.040px;transform-origin:0 0;transform:rotate(90deg);">Properties</span>
<div style="left:14px;top:572px;width:1100px;height:19px;background:linear-gradient(180deg,#4f6285,#465879);border-radius:2px 2px 0 0;"></div>
<span class="t u" style="left:15.4px;top:572px;color:#fff;letter-spacing:0.428px;">Output</span>
<svg style="left:1070px;top:579px;" width="8" height="5" viewBox="0 0 8 5"><path d="M0 0h8l-4 4.500z" fill="#e8ecf4"/></svg>
<svg style="left:1085px;top:575px;" width="8" height="12" viewBox="0 0 8 12"><path d="M2 .500h4v5.500h-4zM.500 6.500h7M4 6.500v4.500" fill="none" stroke="#e8ecf4" stroke-width="1.100"/><path d="M5 1v5" stroke="#e8ecf4" stroke-width="1.200"/></svg>
<svg style="left:1100px;top:576px;" width="10" height="10" viewBox="0 0 10 10"><path d="M1 1l8 8M9 1l-8 8" stroke="#e8ecf4" stroke-width="1.500"/></svg>
<div style="left:14px;top:591px;width:1100px;height:26px;background:#bcc7d8;"></div>
<span class="t u" style="left:20.4px;top:595px;color:#1b1b1b;letter-spacing:0.159px;">Show output from:</span>
<div style="left:127px;top:595px;width:300px;height:19px;background:linear-gradient(180deg,#fdfdfe,#eef1f6);border:1px solid #8591a6;box-sizing:border-box;"></div>
<span class="t u" style="left:130.4px;top:594.5px;color:#1b1b1b;letter-spacing:0.183px;">Build</span>
<svg style="left:417px;top:603px;" width="6" height="4" viewBox="0 0 6 4"><path d="M0 0h6l-3 3.500z" fill="#222"/></svg>
<div style="left:433px;top:595px;width:1px;height:18px;background:#8e9bb0;"></div>
<div style="left:434px;top:595px;width:1px;height:18px;background:#dfe5ef;"></div>
<div style="left:462px;top:595px;width:1px;height:18px;background:#8e9bb0;"></div>
<div style="left:463px;top:595px;width:1px;height:18px;background:#dfe5ef;"></div>
<div style="left:513px;top:595px;width:1px;height:18px;background:#8e9bb0;"></div>
<div style="left:514px;top:595px;width:1px;height:18px;background:#dfe5ef;"></div>
<div style="left:542px;top:595px;width:1px;height:18px;background:#8e9bb0;"></div>
<div style="left:543px;top:595px;width:1px;height:18px;background:#dfe5ef;"></div>
<svg style="left:441px;top:596px;" width="14" height="16" viewBox="0 0 14 16"><path d="M2.500 1.500h7l3 3v7h-10z" fill="#e4e7ec" stroke="#a7aebb"/><path d="M7 15v-7h-2.500l3.500-4 3.500 4h-2.500v7z" fill="#c9cdd5" stroke="#9aa2b2" stroke-width=".8"/></svg>
<svg style="left:469px;top:596px;" width="17" height="16" viewBox="0 0 17 16"><path d="M7.500 1.500h6l2 2v8h-8z" fill="#e4e7ec" stroke="#a7aebb"/><path d="M1 10l5-4v2.500h6v3h-6v2.500z" fill="#c9cdd5" stroke="#9aa2b2" stroke-width=".8"/></svg>
<svg style="left:491px;top:596px;" width="17" height="16" viewBox="0 0 17 16"><path d="M1.500 1.500h6l2 2v8h-8z" fill="#e4e7ec" stroke="#a7aebb"/><path d="M16 10l-5-4v2.500h-6v3h6v2.500z" fill="#c9cdd5" stroke="#9aa2b2" stroke-width=".8"/></svg>
<svg style="left:519px;top:596px;" width="18" height="16" viewBox="0 0 18 16"><path d="M1 3h13M1 5.500h13M1 8h9M1 10.500h7" stroke="#7f8898" stroke-width="1"/><path d="M9 8l7 7M16 8l-7 7" stroke="#e8402a" stroke-width="2.200"/></svg>
<svg style="left:549px;top:597px;" width="16" height="14" viewBox="0 0 16 14"><rect x=".500" y=".500" width="15" height="13" fill="#fff" stroke="#3a62c8"/><rect x="1" y="1" width="14" height="2" fill="#5b8fe0"/><path d="M12 5v4h-7M7.500 6.500l-2.500 2.500 2.500 2.500" fill="none" stroke="#111" stroke-width="1.300"/></svg>
<div style="left:14px;top:617px;width:1083px;height:130px;background:#fff;"></div>
<div style="left:26px;top:733px;width:1071px;height:14px;background:#f4f4f4;"></div>
<span class="t m" style="left:26px;top:612.0px;color:#1b1b1b;clip-path:inset(7px 0 0 0);">1&gt;FinalizeBuildStatus:</span>
<span class="t m" style="left:26px;top:627.0px;color:#1b1b1b;">1&gt;  Deleting file "Debug\Shaders.unsuccessfulbuild".</span>
<span class="t m" style="left:26px;top:642.0px;color:#1b1b1b;">1&gt;  Touching "Debug\Shaders.lastbuildstate".</span>
<span class="t m" style="left:26px;top:657.0px;color:#1b1b1b;">1&gt;</span>
<span class="t m" style="left:26px;top:672.0px;color:#1b1b1b;">1&gt;Build succeeded.</span>
<span class="t m" style="left:26px;top:687.0px;color:#1b1b1b;">1&gt;</span>
<span class="t m" style="left:26px;top:702.0px;color:#1b1b1b;">1&gt;Time Elapsed 00:00:00.03</span>
<span class="t m" style="left:26px;top:717.0px;color:#1b1b1b;">========== Build: 1 succeeded, 0 failed, 0 up-to-date, 0 skipped ==========</span>
<div style="left:1097px;top:617px;width:17px;height:130px;background:#f0f0f0;"></div>
<svg style="left:1102px;top:624px;" width="7" height="4" viewBox="0 0 7 4"><path d="M0 4l3.500-4 3.500 4z" fill="#606060"/></svg>
<svg style="left:1102px;top:736px;" width="7" height="4" viewBox="0 0 7 4"><path d="M0 0l3.500 4 3.500-4z" fill="#606060"/></svg>
<div style="left:1098px;top:655px;width:15px;height:41px;background:linear-gradient(90deg,#f6f6f6,#e2e2e2 50%,#d4d4d4);border:1px solid #979797;border-radius:2px;box-sizing:border-box;"></div>
<div style="left:1102px;top:671px;width:7px;height:1px;background:#555;"></div>
<div style="left:1102px;top:673px;width:7px;height:1px;background:#555;"></div>
<div style="left:1102px;top:675px;width:7px;height:1px;background:#555;"></div>
<div style="left:1102px;top:677px;width:7px;height:1px;background:#555;"></div>
<div style="left:14px;top:747px;width:1083px;height:18px;background:#f4f4f4;"></div>
<div style="left:1097px;top:747px;width:17px;height:18px;background:#fff;"></div>
<svg style="left:20px;top:752px;" width="4" height="7" viewBox="0 0 4 7"><path d="M4 0l-4 3.500 4 3.500z" fill="#8a8a8a"/></svg>
<svg style="left:1086px;top:752px;" width="4" height="7" viewBox="0 0 4 7"><path d="M0 0l4 3.500-4 3.500z" fill="#505050"/></svg>
<div style="left:174px;top:765px;width:68px;height:20px;background:#fff;border-radius:0 0 3px 3px;"></div>
<span class="t u" style="left:38.4px;top:765px;color:#fff;letter-spacing:0.120px;">Code Definition Window</span>
<svg style="left:19px;top:768px;" width="16" height="15" viewBox="0 0 16 15"><rect x=".500" y=".500" width="13" height="11" fill="#fff" stroke="#6f86b5"/><rect x="1" y="1" width="12" height="2" fill="#5b8fe0"/><path d="M6 3.500v7M2.500 7h7M3.500 4.500l5 5M8.500 4.500l-5 5" stroke="#e8b020" stroke-width="1.200" fill="none"/><rect x="9.500" y="8.500" width="6" height="6" fill="#8f8fdc" stroke="#111" stroke-width="1.300"/></svg>
<span class="t u" style="left:198.4px;top:765px;color:#1b1b1b;letter-spacing:0.428px;">Output</span>
<svg style="left:180px;top:768px;" width="15" height="15" viewBox="0 0 15 15"><rect x=".500" y=".500" width="13" height="13" fill="#fff" stroke="#8a96ad"/><rect x="1" y="1" width="12" height="2" fill="#a0b4d8"/><path d="M3 5.500h8M3 7.500h6M3 9.500h8M3 11.500h5" stroke="#4a6ac8" stroke-width="1"/></svg>
<span class="t u" style="left:266.4px;top:765px;color:#fff;letter-spacing:-0.350px;">Find Results 1</span>
<svg style="left:247px;top:768px;" width="17" height="16" viewBox="0 0 17 16"><rect x=".500" y=".500" width="13" height="9" fill="#fff" stroke="#8a96ad"/><rect x="1" y="1" width="12" height="2" fill="#5b8fe0"/><path d="M2 5h9M2 7h9" stroke="#555" stroke-width="1"/><path d="M7 9c0-2.500 2-2.500 2 0M11 9c0-2.500 2-2.500 2 0M6 9h8v2h-8zM6 11h3v4h-3zM11 11h3v4h-3z" fill="#333" stroke="#222" stroke-width=".6"/></svg>
<span class="t u" style="left:368.4px;top:765px;color:#fff;letter-spacing:-0.166px;">Find Symbol Results</span>
<svg style="left:349px;top:768px;" width="17" height="16" viewBox="0 0 17 16"><path d="M6 2l2-2 2 2-2 2z" fill="#4d8fe0" stroke="#2a4f9a" stroke-width=".6"/><path d="M8 5l4-4 4 4-4 4z" fill="#f0c23c" stroke="#a87c14" stroke-width=".6"/><path d="M3 9c0-2.500 2-2.500 2 0M7 9c0-2.500 2-2.500 2 0M2 9h8v2h-8zM2 11h3v4h-3zM7 11h3v4h-3z" fill="#333" stroke="#222" stroke-width=".6"/></svg>
<span class="t u" style="left:504.4px;top:765px;color:#fff;letter-spacing:-0.209px;">Error List</span>
<svg style="left:485px;top:767px;" width="17" height="17" viewBox="0 0 17 17"><rect x="1.500" y="2.500" width="11" height="12" fill="#f4f0e0" stroke="#9a8f70"/><rect x="4.500" y=".500" width="5" height="3.500" fill="#d8c070" stroke="#8a7a40"/><path d="M3 7h8M3 9h6" stroke="#777" stroke-width=".8"/><circle cx="11.500" cy="12" r="4.500" fill="#e8402a" stroke="#a02010" stroke-width=".6"/><path d="M9.700 10.200l3.600 3.600M13.300 10.200l-3.600 3.600" stroke="#fff" stroke-width="1.300"/></svg>
<span class="t u" style="left:11.4px;top:793px;color:#fff;letter-spacing:-0.417px;">Ready</span>
<span class="t u" style="left:769.4px;top:793px;color:#fff;letter-spacing:-0.326px;">Ln 20</span>
<span class="t u" style="left:861.4px;top:793px;color:#fff;letter-spacing:-0.315px;">Col 37</span>
<span class="t u" style="left:953.4px;top:793px;color:#fff;letter-spacing:-0.526px;">Ch 37</span>
<span class="t u" style="left:1088.4px;top:793px;color:#fff;letter-spacing:-0.272px;">INS</span>
<div style="left:1128px;top:810px;width:2px;height:2px;background:#eef1f7;"></div>
<div style="left:1131px;top:807px;width:2px;height:2px;background:#eef1f7;"></div>
<div style="left:1131px;top:810px;width:2px;height:2px;background:#eef1f7;"></div>
<div style="left:1134px;top:804px;width:2px;height:2px;background:#eef1f7;"></div>
<div style="left:1134px;top:807px;width:2px;height:2px;background:#eef1f7;"></div>
<div style="left:1134px;top:810px;width:2px;height:2px;background:#eef1f7;"></div>
<div style="left:1137px;top:801px;width:2px;height:2px;background:#eef1f7;"></div>
<div style="left:1137px;top:804px;width:2px;height:2px;background:#eef1f7;"></div>
<div style="left:1137px;top:807px;width:2px;height:2px;background:#eef1f7;"></div>
<div style="left:1137px;top:810px;width:2px;height:2px;background:#eef1f7;"></div>
<div style="left:1149px;top:0px;width:1173px;height:824px;background:#1d2f55;"></div>
<div style="left:1149px;top:1px;width:1171px;height:823px;background:#293955;"></div>
<div style="left:1149px;top:1px;width:1171px;height:31px;background:#e0e7f2;"></div>
<svg style="left:1161px;top:8px;" width="20" height="20" viewBox="0 0 20 20"><path d="M15.300 0L20 2V18L15.300 20L7 12.700L1.800 16.200L0 15.200V4.800L1.800 3.800L7 7.300ZM15.300 5.800L10 10L15.300 14.200ZM2.100 7.500L5.300 10L2.100 12.500Z" fill="#0a0a0a" fill-rule="evenodd"/></svg>
<span class="t u" style="left:1192.7px;top:8.5px;color:#1b1b1b;letter-spacing:-0.088px;">breeze 2 - Microsoft Visual Studio</span>
<div style="left:2014px;top:6px;width:200px;height:21px;background:#fbfcfd;"></div>
<span class="t u" style="left:2018.4px;top:6.5px;color:#5a5a5a;letter-spacing:0.037px;">Quick Launch (Ctrl+Q)</span>
<svg style="left:2197px;top:10px;" width="12" height="12" viewBox="0 0 12 12"><circle cx="7.500" cy="4.500" r="3.200" fill="none" stroke="#3a3a3a" stroke-width="1.600"/><path d="M5.200 7l-4 4.200" stroke="#3a3a3a" stroke-width="2"/></svg>
<div style="left:2231px;top:15.5px;width:9px;height:3.5px;background:#1e1e1e;"></div>
<svg style="left:2264px;top:10px;" width="10" height="9" viewBox="0 0 10 9"><rect x=".750" y="1.500" width="8.500" height="6.750" fill="none" stroke="#1e1e1e" stroke-width="1.500"/><rect x="0" y="0" width="10" height="2.500" fill="#1e1e1e"/></svg>
<svg style="left:2298px;top:10px;" width="10" height="9" viewBox="0 0 10 9"><path d="M.800 .500l8.400 8M9.200 .500l-8.400 8" stroke="#1e1e1e" stroke-width="1.900"/></svg>
<div style="left:1149px;top:32px;width:1171px;height:48px;background:#ccd5e4;"></div>
<span class="t u" style="left:1159.4px;top:31.5px;color:#1b1b1b;letter-spacing:-0.136px;">File</span>
<span class="t u" style="left:1197.4px;top:31.5px;color:#1b1b1b;letter-spacing:0.028px;">Edit</span>
<span class="t u" style="left:1237.4px;top:31.5px;color:#1b1b1b;letter-spacing:0.001px;">View</span>
<span class="t u" style="left:1282.4px;top:31.5px;color:#1b1b1b;letter-spacing:0.088px;">Theme</span>
<span class="t u" style="left:1339.4px;top:31.5px;color:#1b1b1b;letter-spacing:0.063px;">Project</span>
<span class="t u" style="left:1396.4px;top:31.5px;color:#1b1b1b;letter-spacing:0.183px;">Build</span>
<span class="t u" style="left:1443.4px;top:31.5px;color:#1b1b1b;letter-spacing:0.005px;">Debug</span>
<span class="t u" style="left:1499.4px;top:31.5px;color:#1b1b1b;letter-spacing:0.239px;">Team</span>
<span class="t u" style="left:1548.4px;top:31.5px;color:#1b1b1b;letter-spacing:-0.905px;">SQL</span>
<span class="t u" style="left:1589.4px;top:31.5px;color:#1b1b1b;letter-spacing:0.157px;">Tools</span>
<span class="t u" style="left:1638.4px;top:31.5px;color:#1b1b1b;letter-spacing:-0.179px;">Test</span>
<span class="t u" style="left:1680.4px;top:31.5px;color:#1b1b1b;letter-spacing:0.181px;">Architecture</span>
<span class="t u" style="left:1765.4px;top:31.5px;color:#1b1b1b;letter-spacing:-0.072px;">Analyze</span>
<span class="t u" style="left:1826.9px;top:31.5px;color:#1b1b1b;letter-spacing:0.185px;">Window</span>
<span class="t u" style="left:1890.4px;top:31.5px;color:#1b1b1b;letter-spacing:0.228px;">Help</span>
<div style="left:1159px;top:54px;width:654px;height:25px;background:#d3dae8;"></div>
<div style="left:1826px;top:54px;width:126px;height:25px;background:#d3dae8;"></div>
<svg style="left:1161px;top:57px;" width="6" height="19" viewBox="0 0 6 19"><rect x="0" y="0" width="1" height="1" fill="#6a7890"/><rect x="3" y="0" width="1" height="1" fill="#6a7890"/><rect x="1" y="2" width="1" height="1" fill="#6a7890"/><rect x="4" y="2" width="1" height="1" fill="#6a7890"/><rect x="0" y="4" width="1" height="1" fill="#6a7890"/><rect x="3" y="4" width="1" height="1" fill="#6a7890"/><rect x="1" y="6" width="1" height="1" fill="#6a7890"/><rect x="4" y="6" width="1" height="1" fill="#6a7890"/><rect x="0" y="8" width="1" height="1" fill="#6a7890"/><rect x="3" y="8" width="1" height="1" fill="#6a7890"/><rect x="1" y="10" width="1" height="1" fill="#6a7890"/><rect x="4" y="10" width="1" height="1" fill="#6a7890"/><rect x="0" y="12" width="1" height="1" fill="#6a7890"/><rect x="3" y="12" width="1" height="1" fill="#6a7890"/><rect x="1" y="14" width="1" height="1" fill="#6a7890"/><rect x="4" y="14" width="1" height="1" fill="#6a7890"/><rect x="0" y="16" width="1" height="1" fill="#6a7890"/><rect x="3" y="16" width="1" height="1" fill="#6a7890"/></svg>
<svg style="left:1175px;top:59px;" width="13" height="13" viewBox="0 0 13 13"><circle cx="6.500" cy="6.500" r="6.300" fill="#0e4f9e"/><path d="M10 6.500h-6M6.500 3.500l-3 3 3 3" fill="none" stroke="#fff" stroke-width="1.700"/></svg>
<svg style="left:1196px;top:65px;" width="6" height="4" viewBox="0 0 6 4"><path d="M0 0h6l-3 3.500z" fill="#1e1e1e"/></svg>
<svg style="left:1209px;top:59px;" width="13" height="13" viewBox="0 0 13 13"><circle cx="6.500" cy="6.500" r="6.300" fill="#b6bccb"/><path d="M3 6.500h6M6.500 3.500l3 3-3 3" fill="none" stroke="#dfe3ec" stroke-width="1.700"/></svg>
<div style="left:1229px;top:57px;width:1px;height:19px;background:#8d98ad;"></div>
<div style="left:1230px;top:57px;width:1px;height:19px;background:#e6ebf3;"></div>
<svg style="left:1238px;top:58px;" width="15" height="16" viewBox="0 0 15 16"><path d="M5.500 3.500h5l2.500 2.500v8h-8.500v-10.500" fill="#f4f6fa" stroke="#1e1e1e" stroke-width="1.200"/><path d="M3 6v7.500h2" fill="none" stroke="#1e1e1e" stroke-width="1.100"/><path d="M7.500 7h3.500M7.500 9.500h3.500" stroke="#1e1e1e" stroke-width="1"/><path d="M2.500 0v5M0 2.500h5M.700 .700l3.600 3.600M4.300 .700L.700 4.300" stroke="#d08a14" stroke-width=".9"/></svg>
<svg style="left:1260px;top:65px;" width="6" height="4" viewBox="0 0 6 4"><path d="M0 0h6l-3 3.500z" fill="#1e1e1e"/></svg>
<svg style="left:1273px;top:58px;" width="15" height="15" viewBox="0 0 15 15"><path d="M.700 14v-8.500l6-2v2h7.500v8.500z" fill="#1e1e1e"/><path d="M2.500 13l1.500-5.500h9.500" fill="none" stroke="#d3dae8" stroke-width=".8"/><path d="M2 4c1-3 4.500-3.500 6-1.500M8.500 0v3h-3" fill="none" stroke="#1560b8" stroke-width="1.400"/></svg>
<svg style="left:1296px;top:59px;" width="13" height="13" viewBox="0 0 13 13"><path d="M.500 .500h10l2 2v10h-12z" fill="#1e1e1e"/><rect x="3" y=".500" width="6" height="4" fill="#d3dae8"/><rect x="6.500" y="1" width="1.600" height="2.800" fill="#1e1e1e"/></svg>
<svg style="left:1316px;top:57px;" width="16" height="16" viewBox="0 0 16 16"><path d="M5.500 .500h8l2 2v8h-10z" fill="#1e1e1e"/><rect x="8" y=".500" width="5" height="3" fill="#d3dae8"/><rect x="10.800" y="1" width="1.300" height="2" fill="#1e1e1e"/><path d="M.500 6.500h8l2 2v7h-10z" fill="#1e1e1e" stroke="#d3dae8" stroke-width="1"/><rect x="3" y="7" width="4.500" height="3" fill="#d3dae8"/><rect x="5.500" y="7.500" width="1.300" height="2" fill="#1e1e1e"/></svg>
<div style="left:1338px;top:57px;width:1px;height:19px;background:#8d98ad;"></div>
<div style="left:1339px;top:57px;width:1px;height:19px;background:#e6ebf3;"></div>
<svg style="left:1347px;top:59px;" width="14" height="14" viewBox="0 0 14 14"><path d="M1.500 1v5h5" fill="none" stroke="#9ba2b2" stroke-width="1.600"/><path d="M2 6c2-4.500 10-4.500 10 .500 0 3.500-3 5.500-6 6.500" fill="none" stroke="#9ba2b2" stroke-width="2"/></svg>
<svg style="left:1369px;top:65px;" width="6" height="4" viewBox="0 0 6 4"><path d="M0 0h6l-3 3.500z" fill="#9ba2b2"/></svg>
<svg style="left:1382px;top:59px;" width="14" height="14" viewBox="0 0 14 14"><path d="M12.500 1v5h-5" fill="none" stroke="#9ba2b2" stroke-width="1.600"/><path d="M12 6c-2-4.500-10-4.500-10 .500 0 3.500 3 5.500 6 6.500" fill="none" stroke="#9ba2b2" stroke-width="2"/></svg>
<svg style="left:1404px;top:65px;" width="6" height="4" viewBox="0 0 6 4"><path d="M0 0h6l-3 3.500z" fill="#9ba2b2"/></svg>
<div style="left:1416px;top:57px;width:1px;height:19px;background:#8d98ad;"></div>
<div style="left:1417px;top:57px;width:1px;height:19px;background:#e6ebf3;"></div>
<svg style="left:1428px;top:59px;" width="10" height="14" viewBox="0 0 10 14"><path d="M.500 .500l9 6.500-9 6.500z" fill="#388a34"/></svg>
<span class="t u" style="left:1444.4px;top:56px;color:#1b1b1b;letter-spacing:-0.043px;">Local Windows Debugger</span>
<svg style="left:1586px;top:65px;" width="6" height="4" viewBox="0 0 6 4"><path d="M0 0h6l-3 3.500z" fill="#1e1e1e"/></svg>
<div style="left:1598px;top:55px;width:65px;height:22px;background:#f3f5fa;border:1px solid #99a3b8;box-sizing:border-box;"></div>
<span class="t u" style="left:1601.4px;top:56.0px;color:#1b1b1b;letter-spacing:0.005px;">Debug</span>
<svg style="left:1653px;top:65px;" width="6" height="4" viewBox="0 0 6 4"><path d="M0 0h6l-3 3.500z" fill="#1e1e1e"/></svg>
<div style="left:1669px;top:55px;width:110px;height:22px;background:#f3f5fa;border:1px solid #99a3b8;box-sizing:border-box;"></div>
<span class="t u" style="left:1672.4px;top:56.0px;color:#1b1b1b;letter-spacing:-0.123px;">Win32</span>
<svg style="left:1769px;top:65px;" width="6" height="4" viewBox="0 0 6 4"><path d="M0 0h6l-3 3.500z" fill="#1e1e1e"/></svg>
<div style="left:1785px;top:57px;width:1px;height:19px;background:#8d98ad;"></div>
<div style="left:1786px;top:57px;width:1px;height:19px;background:#e6ebf3;"></div>
<svg style="left:1794px;top:58px;" width="15" height="16" viewBox="0 0 15 16"><path d="M5 9v-5.500l5-2.500v2.500h4.500v8.500h-7.500" fill="#f4f6fa" stroke="#1e1e1e" stroke-width="1.300"/><path d="M7 6.500h7v5h-7z" fill="#1e1e1e"/><circle cx="5" cy="10.500" r="2.600" fill="#d3dae8" stroke="#1560b8" stroke-width="1.300"/><path d="M3.200 12.500l-2.700 3" stroke="#1560b8" stroke-width="1.600"/></svg>
<svg style="left:1816px;top:68px;" width="6" height="7" viewBox="0 0 6 7"><path d="M0 .700h6" stroke="#1e1e1e" stroke-width="1.300"/><path d="M0 3h6l-3 3.500z" fill="#1e1e1e"/></svg>
<svg style="left:1828px;top:57px;" width="6" height="19" viewBox="0 0 6 19"><rect x="0" y="0" width="1" height="1" fill="#6a7890"/><rect x="3" y="0" width="1" height="1" fill="#6a7890"/><rect x="1" y="2" width="1" height="1" fill="#6a7890"/><rect x="4" y="2" width="1" height="1" fill="#6a7890"/><rect x="0" y="4" width="1" height="1" fill="#6a7890"/><rect x="3" y="4" width="1" height="1" fill="#6a7890"/><rect x="1" y="6" width="1" height="1" fill="#6a7890"/><rect x="4" y="6" width="1" height="1" fill="#6a7890"/><rect x="0" y="8" width="1" height="1" fill="#6a7890"/><rect x="3" y="8" width="1" height="1" fill="#6a7890"/><rect x="1" y="10" width="1" height="1" fill="#6a7890"/><rect x="4" y="10" width="1" height="1" fill="#6a7890"/><rect x="0" y="12" width="1" height="1" fill="#6a7890"/><rect x="3" y="12" width="1" height="1" fill="#6a7890"/><rect x="1" y="14" width="1" height="1" fill="#6a7890"/><rect x="4" y="14" width="1" height="1" fill="#6a7890"/><rect x="0" y="16" width="1" height="1" fill="#6a7890"/><rect x="3" y="16" width="1" height="1" fill="#6a7890"/></svg>
<svg style="left:1839px;top:58px;" width="15" height="15" viewBox="0 0 15 15"><path d="M7.500 0v6M4.500 3.500l3 3.500 3-3.500" fill="none" stroke="#1e1e1e" stroke-width="1.700"/><path d="M.500 8h2.500l1 1.500h7l1-1.500h2.500v6.500h-14z" fill="#1e1e1e"/><path d="M3 12h1.200M6 12h1.200M9 12h1.200M12 12h1.200" stroke="#d3dae8" stroke-width="1.200"/></svg>
<svg style="left:1861px;top:58px;" width="15" height="15" viewBox="0 0 15 15"><path d="M7.500 0v6M4.500 3.500l3 3.500 3-3.500" fill="none" stroke="#1e1e1e" stroke-width="1.700"/><path d="M.500 8h2.500l1 1.500h7l1-1.500h2.500v6.500h-14z" fill="#1e1e1e"/><path d="M3 12h1.200M6 12h1.200M9 12h1.200M12 12h1.200" stroke="#d3dae8" stroke-width="1.200"/></svg>
<svg style="left:1861px;top:58px;" width="15" height="15" viewBox="0 0 15 15"><path d="M3 10.500h1.200M6 10.500h1.200M9 10.500h1.200M12 10.500h1.200" stroke="#d3dae8" stroke-width="1"/></svg>
<div style="left:1882px;top:57px;width:1px;height:19px;background:#8d98ad;"></div>
<div style="left:1883px;top:57px;width:1px;height:19px;background:#e6ebf3;"></div>
<svg style="left:1890px;top:58px;" width="16" height="16" viewBox="0 0 16 16"><path d="M5.500 14.500v-8h5l3 3v5z" fill="none" stroke="#b3b9c8" stroke-width="1.300"/><path d="M0 3.500h6M3.500 .500l3 3-3 3" fill="none" stroke="#b3b9c8" stroke-width="1.400"/></svg>
<div style="left:1911px;top:57px;width:1px;height:19px;background:#8d98ad;"></div>
<div style="left:1912px;top:57px;width:1px;height:19px;background:#e6ebf3;"></div>
<svg style="left:1920px;top:58px;" width="15" height="15" viewBox="0 0 15 15"><path d="M2 2l11 8M13 2l-11 8" stroke="#b8bdcb" stroke-width="1" stroke-dasharray="1.500 1.500"/><rect x="1.500" y="3.500" width="12" height="10" fill="none" stroke="#b8bdcb" stroke-dasharray="1 1.500"/><path d="M3 11.500h9" stroke="#b8bdcb" stroke-dasharray="1.200 1.800" stroke-width="1.200"/></svg>
<svg style="left:1941px;top:68px;" width="6" height="7" viewBox="0 0 6 7"><path d="M0 .700h6" stroke="#1e1e1e" stroke-width="1.300"/><path d="M0 3h6l-3 3.500z" fill="#1e1e1e"/></svg>
<div style="left:1155px;top:80px;width:1133px;height:693px;background:linear-gradient(180deg,#293955 0,#2e4060 115px,#33476a 460px,#33476a 512px,#2c3d5c 600px,#293955 693px);"></div>
<div style="left:1155px;top:86px;width:260px;height:21px;background:linear-gradient(180deg,#51668a,#435579);"></div>
<span class="t u" style="left:1158.4px;top:87px;color:#fff;letter-spacing:-0.082px;">Solution Explorer</span>
<svg style="left:1256px;top:93px;" width="104" height="8" viewBox="0 0 104 8"><defs><pattern id="pr1" width="4" height="4" patternUnits="userSpaceOnUse"><rect x="0" y="0" width="1" height="1" fill="#586c93"/><rect x="2" y="2" width="1" height="1" fill="#586c93"/></pattern></defs><rect width="104" height="8" fill="url(#pr1)"/></svg>
<svg style="left:1368px;top:94px;" width="8" height="5" viewBox="0 0 8 5"><path d="M0 0h8l-4 4.500z" fill="#eef1f7"/></svg>
<svg style="left:1383px;top:90px;" width="8" height="12" viewBox="0 0 8 12"><path d="M2 .500h4v5.500h-4zM.500 6.500h7M4 6.500v4.500" fill="none" stroke="#eef1f7" stroke-width="1.100"/><path d="M5 1v5" stroke="#eef1f7" stroke-width="1.200"/></svg>
<svg style="left:1398px;top:91px;" width="10" height="10" viewBox="0 0 10 10"><path d="M1 1l8 8M9 1l-8 8" stroke="#eef1f7" stroke-width="1.500"/></svg>
<div style="left:1155px;top:107px;width:260px;height:28px;background:#cfd6e5;"></div>
<svg style="left:1164px;top:115px;" width="13" height="13" viewBox="0 0 13 13"><circle cx="6.500" cy="6.500" r="6" fill="#b9bdc8"/><path d="M10 6.500h-6M6.500 3.500l-3 3 3 3" fill="none" stroke="#e4e8f0" stroke-width="1.600"/></svg>
<svg style="left:1186px;top:115px;" width="13" height="13" viewBox="0 0 13 13"><circle cx="6.500" cy="6.500" r="6" fill="#b9bdc8"/><path d="M3 6.500h6M6.500 3.500l3 3-3 3" fill="none" stroke="#e4e8f0" stroke-width="1.600"/></svg>
<svg style="left:1206px;top:114px;" width="16" height="15" viewBox="0 0 16 15"><path d="M1 8l7-7 7 7" fill="none" stroke="#1e1e1e" stroke-width="1.500"/><path d="M3 7.500v7h4v-4h2v4h4v-7l-5-5z" fill="#fff" stroke="#1e1e1e" stroke-width="1.300"/><path d="M11.500 2v3" stroke="#1e1e1e" stroke-width="1.600"/></svg>
<div style="left:1228px;top:112px;width:1px;height:20px;background:#8d98ad;"></div>
<div style="left:1229px;top:112px;width:1px;height:20px;background:#e6ebf3;"></div>
<svg style="left:1239px;top:114px;" width="15" height="15" viewBox="0 0 15 15"><circle cx="8.500" cy="8.500" r="4.800" fill="#fff" stroke="#1e1e1e" stroke-width="1.800"/><path d="M8.500 6v3h2.500" fill="none" stroke="#1e1e1e" stroke-width="1.200"/><path d="M.500 1h5l-2.500 3z" fill="#1e1e1e"/></svg>
<svg style="left:1260px;top:121px;" width="6" height="4" viewBox="0 0 6 4"><path d="M0 0h6l-3 3.500z" fill="#1e1e1e"/></svg>
<svg style="left:1272px;top:115px;" width="14" height="13" viewBox="0 0 14 13"><path d="M1 4h11M9 1l3 3-3 3M13 9.500h-11M5 6.500l-3 3 3 3" fill="none" stroke="#1e1e1e" stroke-width="1.600"/></svg>
<svg style="left:1294px;top:114px;" width="15" height="15" viewBox="0 0 15 15"><path d="M4.500 3v-2.500h10v8h-2.500" fill="none" stroke="#1e1e1e" stroke-width="1.200"/><path d="M2.500 5v-2h10v8h-2.500" fill="none" stroke="#1e1e1e" stroke-width="1.200"/><rect x=".700" y="5.700" width="9" height="8" fill="#fff" stroke="#1e1e1e" stroke-width="1.400"/><path d="M3 9.700h4.500" stroke="#1560b8" stroke-width="1.400"/></svg>
<svg style="left:1316px;top:114px;" width="15" height="16" viewBox="0 0 15 16"><path d="M1 .500h6M1 .500v9" fill="none" stroke="#1e1e1e" stroke-width="1.100" stroke-dasharray="1 1"/><path d="M3.500 3.500h5l2.500 2.500v7" fill="none" stroke="#1e1e1e" stroke-width="1.100"/><path d="M5.500 5.500h5l3 3v7h-8z" fill="#fff" stroke="#1e1e1e" stroke-width="1.200"/><path d="M7.500 10h4M7.500 12.500h4" stroke="#1e1e1e" stroke-width="1"/></svg>
<div style="left:1337px;top:112px;width:1px;height:20px;background:#8d98ad;"></div>
<div style="left:1338px;top:112px;width:1px;height:20px;background:#e6ebf3;"></div>
<svg style="left:1347px;top:114px;" width="14" height="15" viewBox="0 0 14 15"><path d="M12.500 4.500a3.600 3.600 0 0 1-5 3.200l-5 5.800-1.700-1.600 5.700-5a3.600 3.600 0 0 1 4.200-4.700l-2.200 2.200 1.800 1.800z" fill="#1e1e1e"/></svg>
<div style="left:1365px;top:109px;width:21px;height:24px;background:#fdf1d4;border:1px solid #e5c365;box-sizing:border-box;"></div>
<svg style="left:1368px;top:115px;" width="15" height="15" viewBox="0 0 15 15"><path d="M.700 10.500v-8.500h4.500l1.500 1.800h7v8.700h-7" fill="#fff" stroke="#1e1e1e" stroke-width="1.400"/><circle cx="4.500" cy="10.500" r="2.300" fill="#fdf1d4" stroke="#1560b8" stroke-width="1.200"/><path d="M3 12.300l-2.500 2.500" stroke="#1560b8" stroke-width="1.500"/></svg>
<div style="left:1155px;top:135px;width:260px;height:21px;background:#fcfcfd;"></div>
<div style="left:1155px;top:156px;width:260px;height:2px;background:#c3cde0;"></div>
<span class="t u" style="left:1159.4px;top:136px;color:#6b6b6b;letter-spacing:-0.145px;">Search Solution Explorer (Ctrl+;)</span>
<svg style="left:1387px;top:139px;" width="13" height="13" viewBox="0 0 13 13"><circle cx="8.500" cy="4.500" r="3.300" fill="none" stroke="#3c3c3c" stroke-width="1.600"/><path d="M6 7l-5 5" stroke="#3c3c3c" stroke-width="2.200"/></svg>
<svg style="left:1405px;top:144px;" width="6" height="4" viewBox="0 0 6 4"><path d="M0 0h6l-3 3.500z" fill="#555"/></svg>
<div style="left:1155px;top:158px;width:243px;height:390px;background:#fff;"></div>
<div style="left:1398px;top:158px;width:17px;height:390px;background:#e8e8ec;"></div>
<svg style="left:1402px;top:167px;" width="9" height="5" viewBox="0 0 9 5"><path d="M0 5l4.500-5 4.500 5z" fill="#9a9ab0"/></svg>
<svg style="left:1402px;top:536px;" width="9" height="5" viewBox="0 0 9 5"><path d="M0 0l4.500 5 4.500-5z" fill="#9a9ab0"/></svg>
<div style="left:1403px;top:315px;width:8px;height:73px;background:#c2c3c9;"></div>
<svg style="left:1259px;top:163.0px;" width="12" height="14" viewBox="0 0 12 14"><path d="M.800 .800h7.400l3 3v9.400h-10.400z" fill="#fff" stroke="#2b2b2b" stroke-width="1.500"/><path d="M3 4.500h2M6 4.500h3M3 6.500h3M7 6.500h1.500" stroke="#2b2b2b" stroke-width="1.100"/><path d="M4 9.300h4" stroke="#2b2b2b" stroke-width="1.700"/></svg>
<span class="t u" style="left:1277.4px;top:159.5px;color:#1b1b1b;letter-spacing:-0.445px;">RayGen.fx</span>
<svg style="left:1259px;top:181.0px;" width="12" height="14" viewBox="0 0 12 14"><path d="M.800 .800h7.400l3 3v9.400h-10.400z" fill="#fff" stroke="#2b2b2b" stroke-width="1.500"/><path d="M3 4.500h2M6 4.500h3M3 6.500h3M7 6.500h1.500" stroke="#2b2b2b" stroke-width="1.100"/><path d="M4 9.300h4" stroke="#2b2b2b" stroke-width="1.700"/></svg>
<span class="t u" style="left:1277.4px;top:177.5px;color:#1b1b1b;letter-spacing:-0.309px;">RayGrid.fx</span>
<svg style="left:1259px;top:199.0px;" width="12" height="14" viewBox="0 0 12 14"><path d="M.800 .800h7.400l3 3v9.400h-10.400z" fill="#fff" stroke="#2b2b2b" stroke-width="1.500"/><path d="M3 4.500h2M6 4.500h3M3 6.500h3M7 6.500h1.500" stroke="#2b2b2b" stroke-width="1.100"/><path d="M4 9.300h4" stroke="#2b2b2b" stroke-width="1.700"/></svg>
<span class="t u" style="left:1277.4px;top:195.5px;color:#1b1b1b;letter-spacing:-0.322px;">VoxelRep.fx</span>
<svg style="left:1220px;top:220.5px;" width="7" height="7" viewBox="0 0 7 7"><path d="M6.500 0v6.500h-6.500z" fill="#1e1e1e"/></svg>
<svg style="left:1240px;top:217.0px;" width="14" height="14" viewBox="0 0 14 14"><path d="M4.200 6.500v-4l6-2h3.300v6" fill="#fff" stroke="#2b2b2b" stroke-width="1.200"/><path d="M10.500 2.800h1.500" stroke="#2b2b2b" stroke-width="1"/><path d="M6.300 6.500h7.700v6.500h-9.500z" fill="#3a3a3a"/><path d="M0 8h5.500" stroke="#2b2b2b" stroke-width="1.700"/><path d="M1 10.500h4l-2 2.200zM3 12v2" fill="#2b2b2b" stroke="#2b2b2b" stroke-width=".9"/></svg>
<span class="t u" style="left:1259.4px;top:213.5px;color:#1b1b1b;letter-spacing:0.011px;">Lights</span>
<svg style="left:1259px;top:235.0px;" width="12" height="14" viewBox="0 0 12 14"><path d="M.800 .800h7.400l3 3v9.400h-10.400z" fill="#fff" stroke="#2b2b2b" stroke-width="1.500"/><path d="M3 4.500h2M6 4.500h3M3 6.500h3M7 6.500h1.500" stroke="#2b2b2b" stroke-width="1.100"/><path d="M4 9.300h4" stroke="#2b2b2b" stroke-width="1.700"/></svg>
<span class="t u" style="left:1277.4px;top:231.5px;color:#1b1b1b;letter-spacing:0.053px;">DirectionalLight.fx</span>
<svg style="left:1220px;top:256.5px;" width="7" height="7" viewBox="0 0 7 7"><path d="M6.500 0v6.500h-6.500z" fill="#1e1e1e"/></svg>
<svg style="left:1240px;top:253.0px;" width="14" height="14" viewBox="0 0 14 14"><path d="M4.200 6.500v-4l6-2h3.300v6" fill="#fff" stroke="#2b2b2b" stroke-width="1.200"/><path d="M10.500 2.800h1.500" stroke="#2b2b2b" stroke-width="1"/><path d="M6.300 6.500h7.700v6.500h-9.500z" fill="#3a3a3a"/><path d="M0 8h5.500" stroke="#2b2b2b" stroke-width="1.700"/><path d="M1 10.500h4l-2 2.200zM3 12v2" fill="#2b2b2b" stroke="#2b2b2b" stroke-width=".9"/></svg>
<span class="t u" style="left:1259.4px;top:249.5px;color:#1b1b1b;letter-spacing:-0.021px;">Materials</span>
<svg style="left:1259px;top:271.0px;" width="12" height="14" viewBox="0 0 12 14"><path d="M.800 .800h7.400l3 3v9.400h-10.400z" fill="#fff" stroke="#2b2b2b" stroke-width="1.500"/><path d="M3 4.500h2M6 4.500h3M3 6.500h3M7 6.500h1.500" stroke="#2b2b2b" stroke-width="1.100"/><path d="M4 9.300h4" stroke="#2b2b2b" stroke-width="1.700"/></svg>
<span class="t u" style="left:1277.4px;top:267.5px;color:#1b1b1b;letter-spacing:-0.000px;">Textured.fx</span>
<svg style="left:1220px;top:292.5px;" width="7" height="7" viewBox="0 0 7 7"><path d="M6.500 0v6.500h-6.500z" fill="#1e1e1e"/></svg>
<svg style="left:1240px;top:289.0px;" width="14" height="14" viewBox="0 0 14 14"><path d="M4.200 6.500v-4l6-2h3.300v6" fill="#fff" stroke="#2b2b2b" stroke-width="1.200"/><path d="M10.500 2.800h1.500" stroke="#2b2b2b" stroke-width="1"/><path d="M6.300 6.500h7.700v6.500h-9.500z" fill="#3a3a3a"/><path d="M0 8h5.500" stroke="#2b2b2b" stroke-width="1.700"/><path d="M1 10.500h4l-2 2.200zM3 12v2" fill="#2b2b2b" stroke="#2b2b2b" stroke-width=".9"/></svg>
<span class="t u" style="left:1259.4px;top:285.5px;color:#1b1b1b;letter-spacing:-0.013px;">Pipeline</span>
<svg style="left:1259px;top:307.0px;" width="12" height="14" viewBox="0 0 12 14"><path d="M.800 .800h7.400l3 3v9.400h-10.400z" fill="#fff" stroke="#2b2b2b" stroke-width="1.500"/><path d="M3 4.500h2M6 4.500h3M3 6.500h3M7 6.500h1.500" stroke="#2b2b2b" stroke-width="1.100"/><path d="M4 9.300h4" stroke="#2b2b2b" stroke-width="1.700"/></svg>
<span class="t u" style="left:1277.4px;top:303.5px;color:#1b1b1b;letter-spacing:-0.049px;">CompactRay.fx</span>
<svg style="left:1259px;top:325.0px;" width="12" height="14" viewBox="0 0 12 14"><path d="M.800 .800h7.400l3 3v9.400h-10.400z" fill="#fff" stroke="#2b2b2b" stroke-width="1.500"/><path d="M3 4.500h2M6 4.500h3M3 6.500h3M7 6.500h1.500" stroke="#2b2b2b" stroke-width="1.100"/><path d="M4 9.300h4" stroke="#2b2b2b" stroke-width="1.700"/></svg>
<span class="t u" style="left:1277.4px;top:321.5px;color:#1b1b1b;letter-spacing:0.149px;">Config.fx</span>
<svg style="left:1259px;top:343.0px;" width="12" height="14" viewBox="0 0 12 14"><path d="M.800 .800h7.400l3 3v9.400h-10.400z" fill="#fff" stroke="#2b2b2b" stroke-width="1.500"/><path d="M3 4.500h2M6 4.500h3M3 6.500h3M7 6.500h1.500" stroke="#2b2b2b" stroke-width="1.100"/><path d="M4 9.300h4" stroke="#2b2b2b" stroke-width="1.700"/></svg>
<span class="t u" style="left:1277.4px;top:339.5px;color:#1b1b1b;letter-spacing:-0.080px;">Pipeline.fx</span>
<svg style="left:1259px;top:361.0px;" width="12" height="14" viewBox="0 0 12 14"><path d="M.800 .800h7.400l3 3v9.400h-10.400z" fill="#fff" stroke="#2b2b2b" stroke-width="1.500"/><path d="M3 4.500h2M6 4.500h3M3 6.500h3M7 6.500h1.500" stroke="#2b2b2b" stroke-width="1.100"/><path d="M4 9.300h4" stroke="#2b2b2b" stroke-width="1.700"/></svg>
<span class="t u" style="left:1277.4px;top:357.5px;color:#1b1b1b;letter-spacing:-0.287px;">Ray.fx</span>
<svg style="left:1259px;top:379.0px;" width="12" height="14" viewBox="0 0 12 14"><path d="M.800 .800h7.400l3 3v9.400h-10.400z" fill="#fff" stroke="#2b2b2b" stroke-width="1.500"/><path d="M3 4.500h2M6 4.500h3M3 6.500h3M7 6.500h1.500" stroke="#2b2b2b" stroke-width="1.100"/><path d="M4 9.300h4" stroke="#2b2b2b" stroke-width="1.700"/></svg>
<span class="t u" style="left:1277.4px;top:375.5px;color:#1b1b1b;letter-spacing:-0.492px;">RaySet.fx</span>
<svg style="left:1259px;top:397.0px;" width="12" height="14" viewBox="0 0 12 14"><path d="M.800 .800h7.400l3 3v9.400h-10.400z" fill="#fff" stroke="#2b2b2b" stroke-width="1.500"/><path d="M3 4.500h2M6 4.500h3M3 6.500h3M7 6.500h1.500" stroke="#2b2b2b" stroke-width="1.100"/><path d="M4 9.300h4" stroke="#2b2b2b" stroke-width="1.700"/></svg>
<span class="t u" style="left:1277.4px;top:393.5px;color:#1b1b1b;letter-spacing:-0.388px;">Scene.fx</span>
<svg style="left:1259px;top:415.0px;" width="12" height="14" viewBox="0 0 12 14"><path d="M.800 .800h7.400l3 3v9.400h-10.400z" fill="#fff" stroke="#2b2b2b" stroke-width="1.500"/><path d="M3 4.500h2M6 4.500h3M3 6.500h3M7 6.500h1.500" stroke="#2b2b2b" stroke-width="1.100"/><path d="M4 9.300h4" stroke="#2b2b2b" stroke-width="1.700"/></svg>
<span class="t u" style="left:1277.4px;top:411.5px;color:#1b1b1b;letter-spacing:-0.230px;">SceneApprox.fx</span>
<svg style="left:1259px;top:433.0px;" width="12" height="14" viewBox="0 0 12 14"><path d="M.800 .800h7.400l3 3v9.400h-10.400z" fill="#fff" stroke="#2b2b2b" stroke-width="1.500"/><path d="M3 4.500h2M6 4.500h3M3 6.500h3M7 6.500h1.500" stroke="#2b2b2b" stroke-width="1.100"/><path d="M4 9.300h4" stroke="#2b2b2b" stroke-width="1.700"/></svg>
<span class="t u" style="left:1277.4px;top:429.5px;color:#1b1b1b;letter-spacing:-0.322px;">VoxelRep.fx</span>
<svg style="left:1220px;top:454.5px;" width="7" height="7" viewBox="0 0 7 7"><path d="M6.500 0v6.500h-6.500z" fill="#1e1e1e"/></svg>
<svg style="left:1240px;top:451.0px;" width="14" height="14" viewBox="0 0 14 14"><path d="M4.200 6.500v-4l6-2h3.300v6" fill="#fff" stroke="#2b2b2b" stroke-width="1.200"/><path d="M10.500 2.800h1.500" stroke="#2b2b2b" stroke-width="1"/><path d="M6.300 6.500h7.700v6.500h-9.500z" fill="#3a3a3a"/><path d="M0 8h5.500" stroke="#2b2b2b" stroke-width="1.700"/><path d="M1 10.500h4l-2 2.200zM3 12v2" fill="#2b2b2b" stroke="#2b2b2b" stroke-width=".9"/></svg>
<span class="t u" style="left:1259.4px;top:447.5px;color:#1b1b1b;letter-spacing:-0.008px;">Prototypes</span>
<svg style="left:1259px;top:469.0px;" width="12" height="14" viewBox="0 0 12 14"><path d="M.800 .800h7.400l3 3v9.400h-10.400z" fill="#fff" stroke="#2b2b2b" stroke-width="1.500"/><path d="M3 4.500h2M6 4.500h3M3 6.500h3M7 6.500h1.500" stroke="#2b2b2b" stroke-width="1.100"/><path d="M4 9.300h4" stroke="#2b2b2b" stroke-width="1.700"/></svg>
<span class="t u" style="left:1277.4px;top:465.5px;color:#1b1b1b;letter-spacing:-0.128px;">ConservativeDebug.fx</span>
<div style="left:1155px;top:485.0px;width:243px;height:17px;background:#d9d9de;"></div>
<svg style="left:1259px;top:487.0px;" width="12" height="14" viewBox="0 0 12 14"><path d="M.800 .800h7.400l3 3v9.400h-10.400z" fill="#fff" stroke="#2b2b2b" stroke-width="1.500"/><path d="M3 4.500h2M6 4.500h3M3 6.500h3M7 6.500h1.500" stroke="#2b2b2b" stroke-width="1.100"/><path d="M4 9.300h4" stroke="#2b2b2b" stroke-width="1.700"/></svg>
<span class="t u" style="left:1277.4px;top:483.5px;color:#1b1b1b;letter-spacing:-0.230px;">SceneApprox.fx</span>
<svg style="left:1221px;top:506.5px;" width="6" height="10" viewBox="0 0 6 10"><path d="M.700 .800l4.300 4.200-4.300 4.200z" fill="#fff" stroke="#1e1e1e" stroke-width="1.100"/></svg>
<svg style="left:1240px;top:505.0px;" width="14" height="14" viewBox="0 0 14 14"><path d="M3.500 .700l6.500 0 1 1.500h3v11h-10.500z" fill="#2b2b2b"/><path d="M0 8h5.500" stroke="#2b2b2b" stroke-width="1.700"/><path d="M1 10.500h4l-2 2.200zM3 12v2" fill="#2b2b2b" stroke="#2b2b2b" stroke-width=".9"/></svg>
<span class="t u" style="left:1259.4px;top:501.5px;color:#1b1b1b;letter-spacing:0.265px;">Utility</span>
<svg style="left:1166px;top:526.5px;" width="7" height="7" viewBox="0 0 7 7"><path d="M6.500 0v6.500h-6.500z" fill="#1e1e1e"/></svg>
<svg style="left:1186px;top:523.0px;" width="14" height="14" viewBox="0 0 14 14"><path d="M3.500 .700l6.500 0 1 1.500h3v11h-10.500z" fill="#2b2b2b"/><path d="M0 8h5.500" stroke="#2b2b2b" stroke-width="1.700"/><path d="M1 10.500h4l-2 2.200zM3 12v2" fill="#2b2b2b" stroke="#2b2b2b" stroke-width=".9"/></svg>
<span class="t u" style="left:1205.4px;top:519.5px;color:#1b1b1b;letter-spacing:-0.068px;">Framework</span>
<div style="left:1155px;top:538px;width:243px;height:10px;overflow:hidden;"><span class="t u" style="left:69px;top:0px;color:#1b1b1b;">beLauncher (Visual Studio 2010)</span><svg style="left:48px;top:3px" width="14" height="12" viewBox="0 0 14 12"><rect x=".700" y=".700" width="12.500" height="11" fill="#fff" stroke="#68217a" stroke-width="1.300"/><path d="M3 4l2 2-2 2M7 4h4M7 8h4" stroke="#1e1e1e" stroke-width="1.200" fill="none"/></svg><svg style="left:29px;top:2px" width="7" height="10" viewBox="0 0 7 10"><path d="M.700 .800l4.300 4.200-4.300 4.200z" fill="#fff" stroke="#1e1e1e" stroke-width="1.100"/></svg></div>
<div style="left:1398px;top:548px;width:17px;height:17px;background:#2b3a5c;"></div>
<div style="left:1155px;top:548px;width:243px;height:17px;background:#e8e8ec;"></div>
<svg style="left:1161px;top:552px;" width="5" height="9" viewBox="0 0 5 9"><path d="M5 0l-5 4.500 5 4.500z" fill="#c9cad2"/></svg>
<svg style="left:1386px;top:552px;" width="5" height="9" viewBox="0 0 5 9"><path d="M0 0l5 4.500-5 4.500z" fill="#c9cad2"/></svg>
<div style="left:1155px;top:565px;width:260px;height:20px;background:#364a6e;"></div>
<div style="left:1155px;top:565px;width:64px;height:20px;background:#fff;"></div>
<span class="t u" style="left:1159.4px;top:565px;color:#1b1b1b;letter-spacing:-0.016px;">Solution...</span>
<span class="t u" style="left:1224.9px;top:565px;color:#fff;letter-spacing:-0.434px;">Class View</span>
<span class="t u" style="left:1289.7px;top:565px;color:#fff;letter-spacing:-0.061px;">Property...</span>
<span class="t u" style="left:1354.8px;top:565px;color:#fff;letter-spacing:-0.349px;">Team Ex...</span>
<div style="left:1284px;top:568px;width:1px;height:16px;background:#44577c;"></div>
<div style="left:1349px;top:568px;width:1px;height:16px;background:#44577c;"></div>
<span class="t u" style="left:1424.4px;top:87px;color:#fff;letter-spacing:-0.230px;">SceneApprox.fx</span>
<div style="left:2170px;top:86px;width:105px;height:19px;background:#3a9af5;"></div>
<span class="t u" style="left:2174.0px;top:87px;color:#fff;letter-spacing:-0.000px;">Textured.fx</span>
<svg style="left:2242px;top:92px;" width="11" height="9" viewBox="0 0 11 9"><path d="M0 3.500h3M3 1v6M3 1.500h7v4.500h-7M3 5h7" fill="none" stroke="#d6e8fb" stroke-width="1.100"/><rect x="3" y="4" width="7" height="2.500" fill="#d6e8fb"/></svg>
<svg style="left:2260px;top:92px;" width="10" height="10" viewBox="0 0 10 10"><path d="M1 1l8 8M9 1l-8 8" stroke="#fff" stroke-width="1.400"/></svg>
<svg style="left:2279px;top:95px;" width="8" height="5" viewBox="0 0 8 5"><path d="M0 0h8l-4 4.500z" fill="#e6eaf2"/></svg>
<div style="left:1421px;top:105px;width:868px;height:2px;background:#3a9af5;"></div>
<div style="left:1421px;top:107px;width:851px;height:461px;background:#fff;"></div>
<div style="left:1421px;top:107px;width:17px;height:461px;background:#e6e7e8;"></div>
<div style="left:1457px;top:362px;width:813px;height:13px;background:#fff;border-top:2px solid #e6e6f0;border-bottom:2px solid #e6e6f0;"></div>
<span class="t m c" style="left:1459px;top:106px;width:811px;overflow:hidden;"><span style="color:#8f8700">}</span></span>
<span class="t m c" style="left:1459px;top:138px;width:811px;overflow:hidden;"><span style="color:#0000ff">DepthStencilState</span> DisableDepthStencilState</span>
<span class="t m c" style="left:1459px;top:154px;width:811px;overflow:hidden;"><span style="color:#8f8700">{</span></span>
<span class="t m c" style="left:1459px;top:170px;width:811px;overflow:hidden;">    DepthEnable <span style="color:#8f8700">=</span> False<span style="color:#8f8700">;</span></span>
<span class="t m c" style="left:1459px;top:186px;width:811px;overflow:hidden;"><span style="color:#8f8700">}</span><span style="color:#8f8700">;</span></span>
<span class="t m c" style="left:1459px;top:218px;width:811px;overflow:hidden;"><span style="color:#0000ff">technique11</span> Tracing <span style="color:#8f8700">&lt;</span></span>
<span class="t m c" style="left:1459px;top:234px;width:811px;overflow:hidden;">    <span style="color:#0000ff">string</span> PipelineStage <span style="color:#8f8700">=</span> <span style="color:#a31515">"TracingPipelineStage"</span><span style="color:#8f8700">;</span></span>
<span class="t m c" style="left:1459px;top:250px;width:811px;overflow:hidden;">    <span style="color:#0000ff">string</span> RenderQueue <span style="color:#8f8700">=</span> <span style="color:#a31515">"DefaultRenderQueue"</span><span style="color:#8f8700">;</span></span>
<span class="t m c" style="left:1459px;top:266px;width:811px;overflow:hidden;">    <span style="color:#0000ff">bool</span> EnableTracing <span style="color:#8f8700">=</span> <span style="color:#0000ff">true</span><span style="color:#8f8700">;</span></span>
<span class="t m c" style="left:1459px;top:282px;width:811px;overflow:hidden;"><span style="color:#8f8700">&gt;</span></span>
<span class="t m c" style="left:1459px;top:298px;width:811px;overflow:hidden;"><span style="color:#8f8700">{</span></span>
<span class="t m c" style="left:1459px;top:314px;width:811px;overflow:hidden;">    <span style="color:#0000ff">pass</span> <span style="color:#8f8700">&lt;</span></span>
<span class="t m c" style="left:1459px;top:330px;width:811px;overflow:hidden;">        <span style="color:#0000ff">string</span> RayGridTracing <span style="color:#8f8700">=</span> <span style="color:#a31515">"Process"</span><span style="color:#8f8700">;</span></span>
<span class="t m c" style="left:1459px;top:346px;width:811px;overflow:hidden;">        <span style="color:#0000ff">string</span> RayTracingGroup <span style="color:#8f8700">=</span> <span style="color:#a31515">"ProcessGroup"</span><span style="color:#8f8700">;</span></span>
<span class="t m c" style="left:1459px;top:362px;width:811px;overflow:hidden;"><span style="color:#0000ff">#ifdef</span> SEPARATE_HITS</span>
<span class="t m c" style="left:1459px;top:378px;width:811px;overflow:hidden;">        <span style="color:#0000ff">string</span> RayHitProcessing <span style="color:#8f8700">=</span> <span style="color:#a31515">"Hit"</span><span style="color:#8f8700">;</span></span>
<span class="t m c" style="left:1459px;top:394px;width:811px;overflow:hidden;">        <span style="color:#0000ff">string</span> RayHitGroup <span style="color:#8f8700">=</span> <span style="color:#a31515">"ProcessGroup"</span><span style="color:#8f8700">;</span></span>
<span class="t m c" style="left:1459px;top:410px;width:811px;overflow:hidden;"><span style="color:#0000ff">#endif</span></span>
<span class="t m c" style="left:1459px;top:426px;width:811px;overflow:hidden;"><span style="color:#0000ff">#ifndef</span> BRUTE_FORCE</span>
<span class="t m c" style="left:1459px;top:442px;width:811px;overflow:hidden;">        <span style="color:#0000ff">bool</span> DynamicDispatch <span style="color:#8f8700">=</span> <span style="color:#0000ff">true</span><span style="color:#8f8700">;</span></span>
<span class="t m c" style="left:1459px;top:458px;width:811px;overflow:hidden;"><span style="color:#0000ff">#else</span></span>
<span class="t m c" style="left:1459px;top:474px;width:811px;overflow:hidden;">        <span style="color:#0000ff">bool</span> ReprocessAll <span style="color:#8f8700">=</span> <span style="color:#0000ff">true</span><span style="color:#8f8700">;</span></span>
<span class="t m c" style="left:1459px;top:490px;width:811px;overflow:hidden;"><span style="color:#0000ff">#endif</span></span>
<span class="t m c" style="left:1459px;top:506px;width:811px;overflow:hidden;">    <span style="color:#8f8700">&gt;</span></span>
<span class="t m c" style="left:1459px;top:522px;width:811px;overflow:hidden;">    <span style="color:#8f8700">{</span></span>
<span class="t m c" style="left:1459px;top:538px;width:811px;overflow:hidden;">        SetVertexShader<span style="color:#8f8700">(</span> <span style="color:#0000ff">CompileShader</span><span style="color:#8f8700">(</span>vs_5_0<span style="color:#8f8700">,</span> VSTracing<span style="color:#8f8700">(</span><span style="color:#8f8700">)</span><span style="color:#8f8700">)</span> <span style="color:#8f8700">)</span><span style="color:#8f8700">;</span></span>
<span class="t m c" style="left:1459px;top:554px;width:811px;overflow:hidden;clip-path:inset(0 0 4px 0);">        SetGeometryShader<span style="color:#8f8700">(</span> ConstructGSWithSO<span style="color:#8f8700">(</span><span style="color:#0000ff">CompileShader</span><span style="color:#8f8700">(</span>gs_5_0<span style="color:#8f8700">,</span> GSTracing<span style="color:#8f8700">(</span><span style="color:#8f8700">)</span><span style="color:#8f8700">)</span><span style="color:#8f8700">,</span> <span style="color:#a31515">"0:Position1.xyz; 0:Normal1.xyz; 0:TexCoord</span></span>
<div style="left:1599px;top:364px;width:1px;height:15px;background:#000;"></div>
<div style="left:1453px;top:107px;width:1px;height:461px;background:#a5a5a5;"></div>
<div style="left:1453px;top:122px;width:5px;height:1px;background:#a5a5a5;"></div>
<div style="left:1453px;top:202px;width:5px;height:1px;background:#a5a5a5;"></div>
<div style="left:1453px;top:410px;width:5px;height:1px;background:#a5a5a5;"></div>
<div style="left:1453px;top:458px;width:5px;height:1px;background:#a5a5a5;"></div>
<div style="left:1453px;top:490px;width:5px;height:1px;background:#a5a5a5;"></div>
<svg style="left:1448px;top:143px;" width="9" height="9" viewBox="0 0 9 9"><rect x=".500" y=".500" width="8" height="8" fill="#fff" stroke="#8a8a8a"/><path d="M2 4.500h5" stroke="#333" stroke-width="1"/></svg>
<svg style="left:1448px;top:287px;" width="9" height="9" viewBox="0 0 9 9"><rect x=".500" y=".500" width="8" height="8" fill="#fff" stroke="#8a8a8a"/><path d="M2 4.500h5" stroke="#333" stroke-width="1"/></svg>
<svg style="left:1448px;top:367px;" width="9" height="9" viewBox="0 0 9 9"><rect x=".500" y=".500" width="8" height="8" fill="#fff" stroke="#8a8a8a"/><path d="M2 4.500h5" stroke="#333" stroke-width="1"/></svg>
<svg style="left:1448px;top:431px;" width="9" height="9" viewBox="0 0 9 9"><rect x=".500" y=".500" width="8" height="8" fill="#fff" stroke="#8a8a8a"/><path d="M2 4.500h5" stroke="#333" stroke-width="1"/></svg>
<svg style="left:1448px;top:463px;" width="9" height="9" viewBox="0 0 9 9"><rect x=".500" y=".500" width="8" height="8" fill="#fff" stroke="#8a8a8a"/><path d="M2 4.500h5" stroke="#333" stroke-width="1"/></svg>
<svg style="left:1448px;top:511px;" width="9" height="9" viewBox="0 0 9 9"><rect x=".500" y=".500" width="8" height="8" fill="#fff" stroke="#8a8a8a"/><path d="M2 4.500h5" stroke="#333" stroke-width="1"/></svg>
<div style="left:2272px;top:108px;width:16px;height:460px;background:#e8e8ec;"></div>
<div style="left:2272px;top:108px;width:16px;height:16px;background:#e8e8ec;"></div>
<svg style="left:2274px;top:110px;" width="12" height="13" viewBox="0 0 12 13"><path d="M6 0l2.500 3h-5zM6 13l2.500-3h-5zM6 2v9" fill="#1e1e1e" stroke="#1e1e1e" stroke-width="1"/><path d="M0 5.500h12M0 7.500h12" stroke="#1e1e1e" stroke-width="1"/></svg>
<svg style="left:2276px;top:130px;" width="9" height="5" viewBox="0 0 9 5"><path d="M0 5l4.500-5 4.500 5z" fill="#9a9ab0"/></svg>
<svg style="left:2276px;top:556px;" width="9" height="5" viewBox="0 0 9 5"><path d="M0 0l4.500 5 4.500-5z" fill="#9a9ab0"/></svg>
<div style="left:2276px;top:377px;width:9px;height:9px;background:#c9cad2;"></div>
<div style="left:1421px;top:568px;width:867px;height:17px;background:#e8e8ec;"></div>
<div style="left:1421px;top:568px;width:60px;height:17px;background:#fff;border:1px solid #b8bfcf;box-sizing:border-box;"></div>
<span class="t u" style="left:1424.8px;top:566.5px;color:#1b1b1b;letter-spacing:-0.546px;">100 %</span>
<svg style="left:1467px;top:575px;" width="6" height="4" viewBox="0 0 6 4"><path d="M0 0h6l-3 3.500z" fill="#1e1e1e"/></svg>
<svg style="left:1487px;top:572px;" width="5" height="9" viewBox="0 0 5 9"><path d="M5 0l-5 4.500 5 4.500z" fill="#86869c"/></svg>
<svg style="left:2262px;top:572px;" width="5" height="9" viewBox="0 0 5 9"><path d="M0 0l5 4.500-5 4.500z" fill="#86869c"/></svg>
<div style="left:1498px;top:573px;width:401px;height:8px;background:#c2c3c9;"></div>
<div style="left:1155px;top:592px;width:1133px;height:20px;background:linear-gradient(180deg,#51668a,#435579);"></div>
<span class="t u" style="left:1158.4px;top:592px;color:#fff;letter-spacing:0.428px;">Output</span>
<svg style="left:1204px;top:598px;" width="1030" height="8" viewBox="0 0 1030 8"><defs><pattern id="pr2" width="4" height="4" patternUnits="userSpaceOnUse"><rect x="0" y="0" width="1" height="1" fill="#586c93"/><rect x="2" y="2" width="1" height="1" fill="#586c93"/></pattern></defs><rect width="1030" height="8" fill="url(#pr2)"/></svg>
<svg style="left:2241px;top:599px;" width="8" height="5" viewBox="0 0 8 5"><path d="M0 0h8l-4 4.500z" fill="#eef1f7"/></svg>
<svg style="left:2256px;top:595px;" width="8" height="12" viewBox="0 0 8 12"><path d="M2 .500h4v5.500h-4zM.500 6.500h7M4 6.500v4.500" fill="none" stroke="#eef1f7" stroke-width="1.100"/><path d="M5 1v5" stroke="#eef1f7" stroke-width="1.200"/></svg>
<svg style="left:2271px;top:596px;" width="10" height="10" viewBox="0 0 10 10"><path d="M1 1l8 8M9 1l-8 8" stroke="#eef1f7" stroke-width="1.500"/></svg>
<div style="left:1155px;top:612px;width:1133px;height:25px;background:#cbd3e3;"></div>
<span class="t u" style="left:1161.4px;top:615.5px;color:#1b1b1b;letter-spacing:0.159px;">Show output from:</span>
<div style="left:1268px;top:615px;width:300px;height:21px;background:#f3f5fa;border:1px solid #99a3b8;box-sizing:border-box;"></div>
<span class="t u" style="left:1271.4px;top:615.5px;color:#1b1b1b;letter-spacing:0.183px;">Build</span>
<svg style="left:1557px;top:624px;" width="6" height="4" viewBox="0 0 6 4"><path d="M0 0h6l-3 3.500z" fill="#1e1e1e"/></svg>
<div style="left:1574px;top:616px;width:1px;height:18px;background:#8d98ad;"></div>
<div style="left:1575px;top:616px;width:1px;height:18px;background:#e6ebf3;"></div>
<div style="left:1604px;top:616px;width:1px;height:18px;background:#8d98ad;"></div>
<div style="left:1605px;top:616px;width:1px;height:18px;background:#e6ebf3;"></div>
<div style="left:1656px;top:616px;width:1px;height:18px;background:#8d98ad;"></div>
<div style="left:1657px;top:616px;width:1px;height:18px;background:#e6ebf3;"></div>
<div style="left:1686px;top:616px;width:1px;height:18px;background:#8d98ad;"></div>
<div style="left:1687px;top:616px;width:1px;height:18px;background:#e6ebf3;"></div>
<svg style="left:1583px;top:617px;" width="15" height="16" viewBox="0 0 15 16"><path d="M4 6c0-3 4-4 5-1M9.500 2v3.500h-3.500" fill="none" stroke="#b3b8c6" stroke-width="1.300"/><path d="M2 10h11M2 12.500h11" stroke="#b3b8c6" stroke-width="1.300"/></svg>
<svg style="left:1613px;top:617px;" width="15" height="16" viewBox="0 0 15 16"><path d="M7 4h-5M4.500 1.500l-2.500 2.500 2.500 2.500" fill="none" stroke="#b3b8c6" stroke-width="1.300"/><path d="M5 9.500h8M2 12.500h11" stroke="#b3b8c6" stroke-width="1.300"/></svg>
<svg style="left:1634px;top:617px;" width="15" height="16" viewBox="0 0 15 16"><path d="M2 4h5M4.500 1.500l2.500 2.500-2.500 2.500" fill="none" stroke="#b3b8c6" stroke-width="1.300"/><path d="M5 9.500h8M2 12.500h11" stroke="#b3b8c6" stroke-width="1.300"/></svg>
<svg style="left:1664px;top:617px;" width="15" height="16" viewBox="0 0 15 16"><path d="M1 3.500h5M1 8h12M1 11.500h12M1 15h12" stroke="#1e1e1e" stroke-width="1.500"/><path d="M7.500 .500l5 5M12.500 .500l-5 5" stroke="#c01818" stroke-width="1.600"/></svg>
<svg style="left:1694px;top:618px;" width="15" height="14" viewBox="0 0 15 14"><path d="M.500 4v-3h3v3M.500 2.500h3M5.500 0v4h2.500v-2.500h-2.500M1 7.500h2.500M1 7.500v3h2.500" fill="none" stroke="#1e1e1e" stroke-width="1"/><path d="M13.500 3v6h-7M9 6.500l-2.500 2.500 2.500 2.500" fill="none" stroke="#1e1e1e" stroke-width="1.600"/></svg>
<div style="left:1155px;top:637px;width:1133px;height:136px;background:#e6e7e8;"></div>
<span class="t m" style="left:1167px;top:636px;color:#1b1b1b;">========== Build: 0 succeeded, 0 failed, 1 up-to-date, 0 skipped ==========</span>
<svg style="left:2275px;top:644px;" width="9" height="5" viewBox="0 0 9 5"><path d="M0 5l4.500-5 4.500 5z" fill="#9a9ab0"/></svg>
<svg style="left:2275px;top:746px;" width="9" height="5" viewBox="0 0 9 5"><path d="M0 0l4.500 5 4.500-5z" fill="#9a9ab0"/></svg>
<div style="left:2276px;top:655px;width:8px;height:74px;background:#d0d1d7;"></div>
<svg style="left:1161px;top:761px;" width="5" height="9" viewBox="0 0 5 9"><path d="M5 0l-5 4.500 5 4.500z" fill="#c9cad2"/></svg>
<svg style="left:2262px;top:761px;" width="5" height="9" viewBox="0 0 5 9"><path d="M0 0l5 4.500-5 4.500z" fill="#c9cad2"/></svg>
<div style="left:1155px;top:773px;width:47px;height:21px;background:#fff;"></div>
<span class="t u" style="left:1159.4px;top:774px;color:#1b1b1b;letter-spacing:0.428px;">Output</span>
<span class="t u" style="left:1207.4px;top:774px;color:#fff;letter-spacing:-0.350px;">Find Results 1</span>
<div style="left:2314px;top:86px;width:6px;height:78px;background:#3d4f73;"></div>
<span class="t u" style="left:2314px;top:86px;color:#fff;letter-spacing:-0.205px;transform-origin:0 0;transform:rotate(90deg);">Server Explorer</span>
<div style="left:2314px;top:175px;width:6px;height:44px;background:#3d4f73;"></div>
<span class="t u" style="left:2314px;top:175px;color:#fff;letter-spacing:0.561px;transform-origin:0 0;transform:rotate(90deg);">Toolbox</span>
<div style="left:2314px;top:230px;width:6px;height:54px;background:#3d4f73;"></div>
<span class="t u" style="left:2314px;top:230px;color:#fff;letter-spacing:0.060px;transform-origin:0 0;transform:rotate(90deg);">Properties</span>
<span class="t u" style="left:1152.4px;top:801.5px;color:#fff;letter-spacing:-0.417px;">Ready</span>
<span class="t u" style="left:1947.4px;top:801.5px;color:#fff;letter-spacing:-0.351px;">Ln 713</span>
<span class="t u" style="left:2039.4px;top:801.5px;color:#fff;letter-spacing:-0.315px;">Col 21</span>
<span class="t u" style="left:2131.4px;top:801.5px;color:#fff;letter-spacing:-0.446px;">Ch 21</span>
<span class="t u" style="left:2266.4px;top:801.5px;color:#fff;letter-spacing:-0.272px;">INS</span>
<div style="left:2306px;top:815px;width:1px;height:1px;background:#8a97b4;"></div>
<div style="left:2309px;top:812px;width:1px;height:1px;background:#8a97b4;"></div>
<div style="left:2309px;top:815px;width:1px;height:1px;background:#8a97b4;"></div>
<div style="left:2312px;top:809px;width:1px;height:1px;background:#8a97b4;"></div>
<div style="left:2312px;top:812px;width:1px;height:1px;background:#8a97b4;"></div>
<div style="left:2312px;top:815px;width:1px;height:1px;background:#8a97b4;"></div>
<div style="left:2315px;top:806px;width:1px;height:1px;background:#8a97b4;"></div>
<div style="left:2315px;top:809px;width:1px;height:1px;background:#8a97b4;"></div>
<div style="left:2315px;top:812px;width:1px;height:1px;background:#8a97b4;"></div>
<div style="left:2315px;top:815px;width:1px;height:1px;background:#8a97b4;"></div>
</body></html>
